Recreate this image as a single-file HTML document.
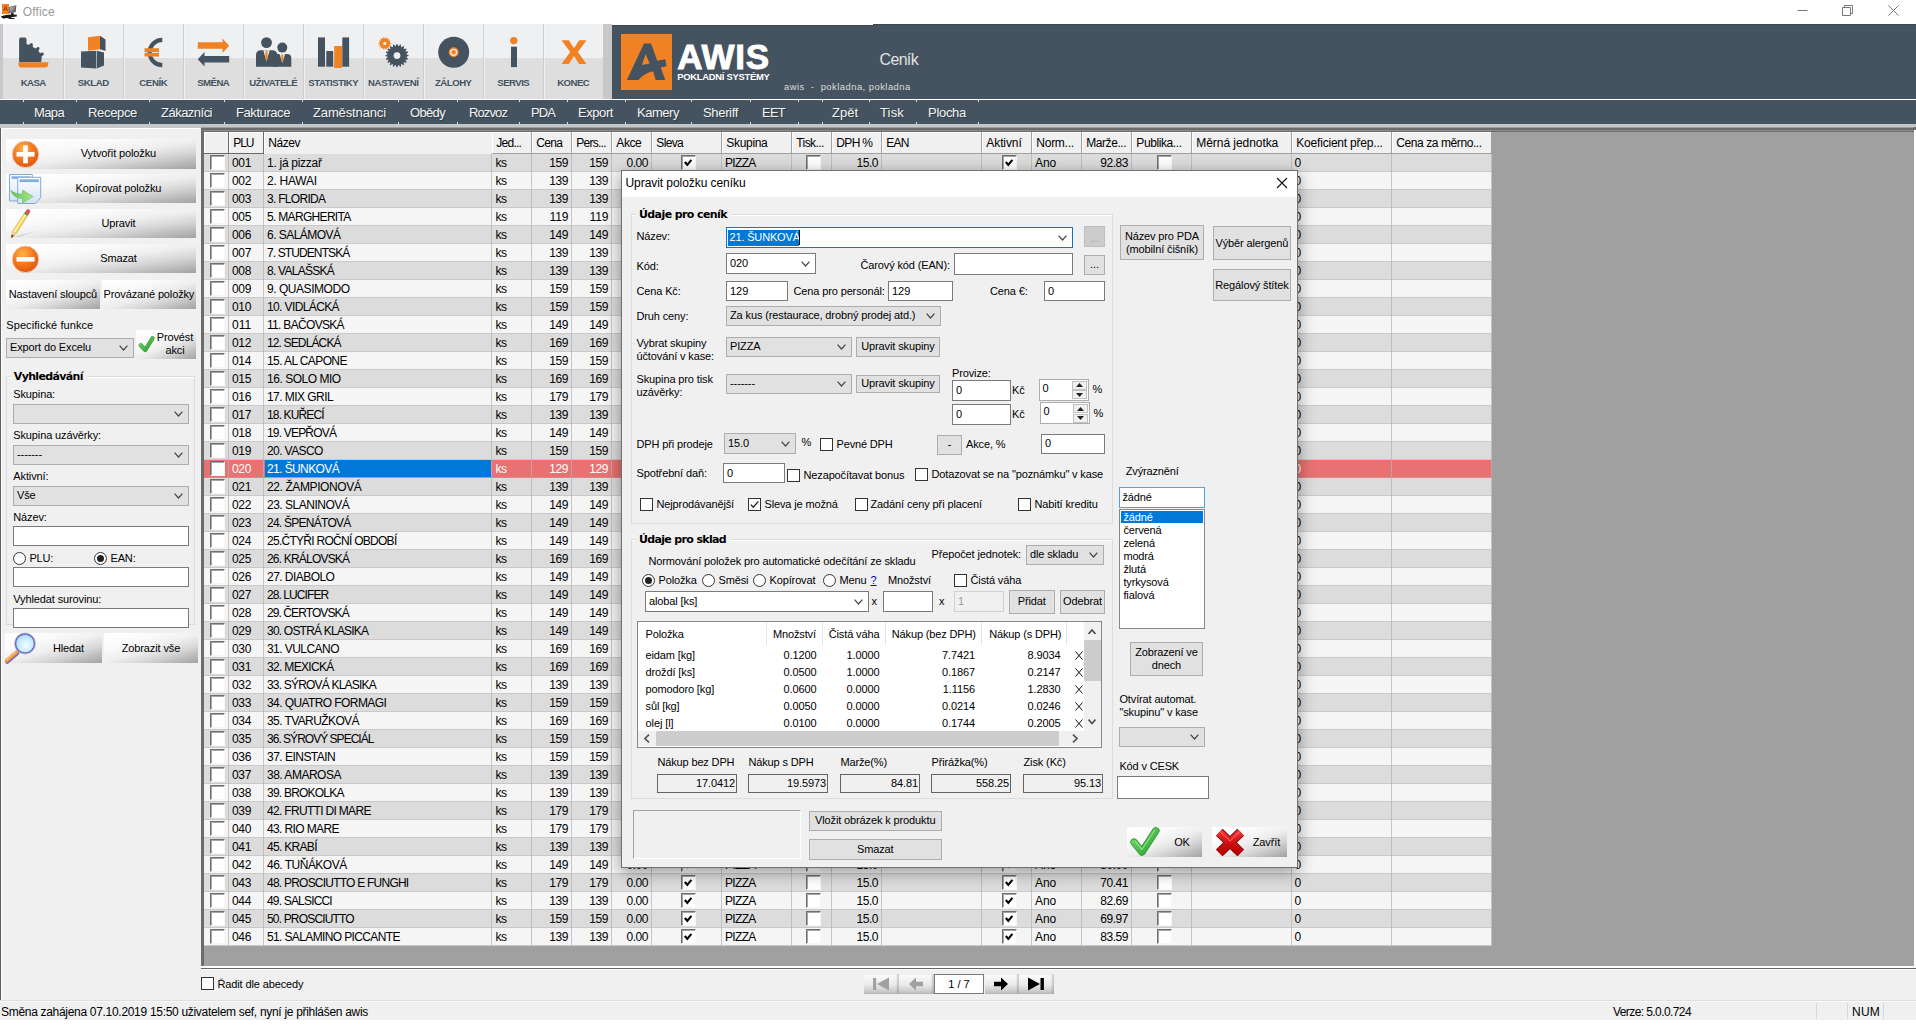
<!DOCTYPE html><html lang="cs"><head><meta charset="utf-8"><title>Office</title><style>
*{box-sizing:border-box}
html,body{margin:0;padding:0}
body{width:1916px;height:1036px;position:relative;overflow:hidden;background:#fff;font-family:"Liberation Sans",sans-serif;font-size:11px;color:#000}
div,span.t,svg{position:absolute}
span.t{white-space:pre;display:block}
.dk{background:#44535f}
.inp{background:#fff;border:1px solid #7a7a7a}
.cmb{background:#e1e1e1;border:1px solid #adadad}
.cmbw{background:#fff;border:1px solid #7a7a7a}
.btn{background:#e1e1e1;border:1px solid #adadad}
.cb{background:#fff;border:1px solid #333;width:13px;height:13px}
.rb{background:#fff;border:1px solid #333;width:13px;height:13px;border-radius:50%}
.gcb{width:15px;height:15px;background:#fff;border:1px solid;border-color:#6e6e6e #f6f6f6 #f6f6f6 #6e6e6e;box-shadow:inset 1px 1px 0 #a6a6a6}
.grp{border:1px solid #dcdcdc}
.hd{background:#f0f0f0;border-right:1px solid #a0a0a0;border-bottom:1px solid #a0a0a0;box-shadow:inset 1px 1px 0 #fff}
</style></head><body>
<svg style="left:0;top:0" width="20" height="22" viewBox="0 0 20 22"><rect x="2" y="4" width="7" height="10" fill="#f08223"/><path d="M3.5 11 L5.5 6 L7.5 11 M4.3 9.3 L7 9" stroke="#a33c08" stroke-width="1" fill="none"/><defs><linearGradient id="mon" x1="0" y1="0" x2="1" y2="1"><stop offset="0" stop-color="#c8c9d0"/><stop offset=".5" stop-color="#8d8f98"/><stop offset="1" stop-color="#34383b"/></linearGradient></defs><path d="M9.2 7 L16.4 5.2 L15.6 12 L8.6 13.6 Z" fill="#4a4d52"/><path d="M9.8 7.5 L15.6 6 L15 11.6 L9.3 12.9 Z" fill="url(#mon)"/><path d="M11 13 L13.5 12.5 L13.8 15.5 L11 15.8 Z" fill="#2c3234"/><path d="M1 16.2 Q8 13.6 16.8 14.8 L16.8 16.6 Q12 17 10 18 L14.5 18 L14.5 19 L10 19 Q6 17 4 18.8 L1.5 17.4 Z" fill="#15191a"/></svg>
<span class="t" style="letter-spacing:0.146px;left:22.8px;top:3.6px;line-height:16px;font-size:12px;color:#999">Office</span>
<svg style="left:1790px;top:0" width="126" height="24" viewBox="0 0 126 24"><g stroke="#777" stroke-width="1" fill="none"><path d="M7.5 10.5h10"/><path d="M52.5 7.5h8v8h-8z M54.5 7.5v-2h8v8h-2"/><path d="M98.5 5.5l10 10M108.5 5.5l-10 10"/></g></svg>
<div style="left:0px;top:24px;width:612px;height:75px;background:#c8c8c8"></div>
<div style="left:3px;top:24px;width:600px;height:34px;background:#eff0f1"></div>
<div style="left:3px;top:58px;width:600px;height:41px;background:#dedede"></div>
<span class="t" style="letter-spacing:-0.550px;left:33.2248px;transform:translateX(-50%);top:76.1px;line-height:13.6px;font-size:9.6px;color:#44535f;font-weight:bold">KASA</span>
<div style="left:63px;top:24px;width:1px;height:75px;background:#cdcdcd"></div>
<div style="left:64px;top:24px;width:1px;height:75px;background:#f6f6f6;opacity:.7"></div>
<span class="t" style="letter-spacing:-0.413px;left:93.2934px;transform:translateX(-50%);top:76.1px;line-height:13.6px;font-size:9.6px;color:#44535f;font-weight:bold">SKLAD</span>
<div style="left:123px;top:24px;width:1px;height:75px;background:#cdcdcd"></div>
<div style="left:124px;top:24px;width:1px;height:75px;background:#f6f6f6;opacity:.7"></div>
<span class="t" style="letter-spacing:-0.374px;left:153.313px;transform:translateX(-50%);top:76.1px;line-height:13.6px;font-size:9.6px;color:#44535f;font-weight:bold">CENÍK</span>
<div style="left:183px;top:24px;width:1px;height:75px;background:#cdcdcd"></div>
<div style="left:184px;top:24px;width:1px;height:75px;background:#f6f6f6;opacity:.7"></div>
<span class="t" style="letter-spacing:-0.534px;left:213.233px;transform:translateX(-50%);top:76.1px;line-height:13.6px;font-size:9.6px;color:#44535f;font-weight:bold">SMĚNA</span>
<div style="left:243px;top:24px;width:1px;height:75px;background:#cdcdcd"></div>
<div style="left:244px;top:24px;width:1px;height:75px;background:#f6f6f6;opacity:.7"></div>
<span class="t" style="letter-spacing:-0.434px;left:273.283px;transform:translateX(-50%);top:76.1px;line-height:13.6px;font-size:9.6px;color:#44535f;font-weight:bold">UŽIVATELÉ</span>
<div style="left:303px;top:24px;width:1px;height:75px;background:#cdcdcd"></div>
<div style="left:304px;top:24px;width:1px;height:75px;background:#f6f6f6;opacity:.7"></div>
<span class="t" style="letter-spacing:-0.458px;left:333.271px;transform:translateX(-50%);top:76.1px;line-height:13.6px;font-size:9.6px;color:#44535f;font-weight:bold">STATISTIKY</span>
<div style="left:363px;top:24px;width:1px;height:75px;background:#cdcdcd"></div>
<div style="left:364px;top:24px;width:1px;height:75px;background:#f6f6f6;opacity:.7"></div>
<span class="t" style="letter-spacing:-0.394px;left:393.303px;transform:translateX(-50%);top:76.1px;line-height:13.6px;font-size:9.6px;color:#44535f;font-weight:bold">NASTAVENÍ</span>
<div style="left:423px;top:24px;width:1px;height:75px;background:#cdcdcd"></div>
<div style="left:424px;top:24px;width:1px;height:75px;background:#f6f6f6;opacity:.7"></div>
<span class="t" style="letter-spacing:-0.494px;left:453.253px;transform:translateX(-50%);top:76.1px;line-height:13.6px;font-size:9.6px;color:#44535f;font-weight:bold">ZÁLOHY</span>
<div style="left:483px;top:24px;width:1px;height:75px;background:#cdcdcd"></div>
<div style="left:484px;top:24px;width:1px;height:75px;background:#f6f6f6;opacity:.7"></div>
<span class="t" style="letter-spacing:-0.507px;left:513.247px;transform:translateX(-50%);top:76.1px;line-height:13.6px;font-size:9.6px;color:#44535f;font-weight:bold">SERVIS</span>
<div style="left:543px;top:24px;width:1px;height:75px;background:#cdcdcd"></div>
<div style="left:544px;top:24px;width:1px;height:75px;background:#f6f6f6;opacity:.7"></div>
<span class="t" style="letter-spacing:-0.534px;left:573.233px;transform:translateX(-50%);top:76.1px;line-height:13.6px;font-size:9.6px;color:#44535f;font-weight:bold">KONEC</span>
<svg style="left:0;top:24px" width="612" height="75" viewBox="0 24 612 75"><path d="M19.1 62.2 L19.1 39.4 Q19.1 37.6 20.9 37.6 L24.8 37.6 Q26.5 37.6 26.5 39.3 L26.5 43.9 L26.63 44.21 L29.13 44.78 L30.83 43.10 L32.80 43.71 L32.85 46.97 L35.39 48.39 L38.18 46.72 L39.73 48.08 L38.45 51.07 L39.89 52.93 L43.11 52.44 L44.04 54.28 L41.72 56.57 L41.65 58.87 L41.32 60.59 L41.30 62.20 L41.3 62.2 Z" fill="#44535f"/><path d="M18.5 62.2 L48.2 62.2 L48.2 64.5 Q48.2 67.5 45 67.5 L21.5 67.5 Q18.5 67.5 18.5 64.5 Z" fill="#f08223"/><path d="M88 37.2 L100 35.7 L100 49.2 L88 50.7 Z" fill="#f08223"/><path d="M100 35.7 L105.5 39.5 L105.5 51 L100 49.2 Z" fill="#44535f"/><path d="M81 51.5 L96.3 50.7 L96.3 68.6 L81 67.4 Z" fill="#44535f"/><path d="M96.9 50.7 L104 52.4 L104 65.5 L96.9 68.6 Z" fill="#44535f"/><path d="M162.3 39.85 A 12.65 12.65 0 0 0 162.3 65.15" fill="none" stroke="#44535f" stroke-width="4.2"/><rect x="144.5" y="48.2" width="14.5" height="3.8" fill="#f08223"/><rect x="144.5" y="52.8" width="14.5" height="3.8" fill="#f08223"/><path d="M197.8 42.3 L222.5 42.3 L222.5 38.4 L229.2 45.7 L222.5 53 L222.5 48.8 L197.8 48.8 Z" fill="#f08223"/><path d="M229.2 56 L204.5 56 L204.5 52 L197.8 59.3 L204.5 66.6 L204.5 62.4 L229.2 62.4 Z" fill="#44535f"/><circle cx="266.5" cy="42.6" r="5.4" fill="#44535f"/><circle cx="282.3" cy="47.6" r="5" fill="#44535f"/><path d="M256 66.7 L256 55 Q256 50.3 261 50.3 L272 50.3 Q277.3 50.3 277.3 55 L277.3 66.7 Z" fill="#44535f"/><path d="M273 66.7 L273 58 Q273 54 277.5 54 L287 54 Q291.3 54 291.3 58 L291.3 66.7 Z" fill="#44535f"/><path d="M263.3 50.3 L266.5 61.5 L269.7 50.3 Z" fill="#eceded"/><path d="M265.6 50.8 L267.4 50.8 L267.8 58 L266.5 60.5 L265.2 58 Z" fill="#f08223"/><path d="M279.5 54 L282.3 63 L285.1 54 Z" fill="#e4e4e4"/><path d="M281.5 54.5 L283.1 54.5 L283.4 60 L282.3 62 L281.2 60 Z" fill="#f08223"/><rect x="318" y="37.4" width="7" height="29.3" fill="#44535f"/><rect x="326.3" y="51" width="6.9" height="15.7" fill="#44535f"/><rect x="334.2" y="46" width="7.8" height="22" fill="#f08223"/><rect x="342.3" y="37.4" width="6.8" height="29.3" fill="#44535f"/><path d="M390.99 43.05 L390.99 43.75 L389.73 44.24 L389.60 44.78 L390.53 45.77 L390.23 46.40 L388.88 46.29 L388.53 46.73 L388.93 48.02 L388.39 48.46 L387.22 47.78 L386.71 48.02 L386.52 49.36 L385.84 49.51 L385.08 48.39 L384.52 48.39 L383.76 49.51 L383.08 49.36 L382.89 48.02 L382.38 47.78 L381.21 48.46 L380.67 48.02 L381.07 46.73 L380.72 46.29 L379.37 46.40 L379.07 45.77 L380.00 44.78 L379.87 44.24 L378.61 43.75 L378.61 43.05 L379.87 42.56 L380.00 42.02 L379.07 41.03 L379.37 40.40 L380.72 40.51 L381.07 40.07 L380.67 38.78 L381.21 38.34 L382.38 39.02 L382.89 38.78 L383.08 37.44 L383.76 37.29 L384.52 38.41 L385.08 38.41 L385.84 37.29 L386.52 37.44 L386.71 38.78 L387.22 39.02 L388.39 38.34 L388.93 38.78 L388.53 40.07 L388.88 40.51 L390.23 40.40 L390.53 41.03 L389.60 42.02 L389.73 42.56Z" fill="#f08223"/><circle cx="384.8" cy="43.4" r="1.7" fill="#f6e8dc"/><path d="M408.59 55.14 L408.59 56.06 L406.63 56.74 L406.51 57.49 L408.16 58.75 L407.88 59.61 L405.81 59.66 L405.46 60.34 L406.65 62.04 L406.11 62.78 L404.12 62.18 L403.58 62.72 L404.18 64.71 L403.44 65.25 L401.74 64.06 L401.06 64.41 L401.01 66.48 L400.15 66.76 L398.89 65.11 L398.14 65.23 L397.46 67.19 L396.54 67.19 L395.86 65.23 L395.11 65.11 L393.85 66.76 L392.99 66.48 L392.94 64.41 L392.26 64.06 L390.56 65.25 L389.82 64.71 L390.42 62.72 L389.88 62.18 L387.89 62.78 L387.35 62.04 L388.54 60.34 L388.19 59.66 L386.12 59.61 L385.84 58.75 L387.49 57.49 L387.37 56.74 L385.41 56.06 L385.41 55.14 L387.37 54.46 L387.49 53.71 L385.84 52.45 L386.12 51.59 L388.19 51.54 L388.54 50.86 L387.35 49.16 L387.89 48.42 L389.88 49.02 L390.42 48.48 L389.82 46.49 L390.56 45.95 L392.26 47.14 L392.94 46.79 L392.99 44.72 L393.85 44.44 L395.11 46.09 L395.86 45.97 L396.54 44.01 L397.46 44.01 L398.14 45.97 L398.89 46.09 L400.15 44.44 L401.01 44.72 L401.06 46.79 L401.74 47.14 L403.44 45.95 L404.18 46.49 L403.58 48.48 L404.12 49.02 L406.11 48.42 L406.65 49.16 L405.46 50.86 L405.81 51.54 L407.88 51.59 L408.16 52.45 L406.51 53.71 L406.63 54.46Z" fill="#44535f"/><circle cx="397" cy="55.6" r="3.4" fill="#eeeeef"/><circle cx="453.7" cy="52.3" r="15.5" fill="#44535f"/><circle cx="453.7" cy="52.3" r="5" fill="#f08223"/><circle cx="453.7" cy="52.3" r="3.6" fill="#f3e6da"/><circle cx="453.7" cy="52.3" r="2.2" fill="#f08223"/><circle cx="513.8" cy="40.6" r="3.7" fill="#f08223"/><rect x="511" y="46.7" width="6" height="20.4" fill="#44535f"/><path d="M561.5 40.3 L568.8 40.3 L574 48.3 L579.2 40.3 L586.5 40.3 L577.8 52.1 L586.5 64 L579.2 64 L574 56 L568.8 64 L561.5 64 L570.2 52.1 Z" fill="#f08223"/></svg>
<div class="dk" style="left:612px;top:25px;width:1304px;height:74px;"></div>
<div class="dk" style="left:873px;top:24px;width:1043px;height:2px;"></div>
<div style="left:612px;top:25px;width:261px;height:1px;background:#3b4853"></div>
<div style="left:873px;top:24px;width:1043px;height:1px;background:#3b4853"></div>
<svg style="left:620.6px;top:33.8px" width="51" height="56" viewBox="0 0 51 56"><rect width="51" height="56" fill="#f08223"/><path d="M5.85 45.9 L22.96 9.6 L30.06 9.6 L36.3 26.7 L44.3 25.3 L45.5 32.2 L39.7 33.6 L44.3 45.9 L34.7 45.9 L32.2 37.2 Q23 39.2 17.5 45.9 Z M20.9 30.9 L24.6 20 L28.6 29.6 Z" fill="#44535f" fill-rule="evenodd"/></svg>
<span class="t" style="letter-spacing:0.763px;left:677.3px;top:36.9px;line-height:39px;font-size:35px;color:#fff;font-weight:bold;-webkit-text-stroke:0.9px #fff">AWIS</span>
<span class="t" style="letter-spacing:-0.258px;left:677.3px;top:70.3px;line-height:13.4px;font-size:9.4px;color:#fff;font-weight:bold">POKLADNÍ SYSTÉMY</span>
<span class="t" style="letter-spacing:-0.659px;left:879.5px;top:50px;line-height:20px;font-size:16px;color:#e2e2e2">Ceník</span>
<span class="t" style="letter-spacing:0.485px;left:784px;top:79.7px;line-height:13.4px;font-size:9.4px;color:#dcdcdc">awis  -  pokladna, pokladna</span>
<div style="left:0px;top:99px;width:1916px;height:1px;background:#fff"></div>
<div class="dk" style="left:0px;top:100px;width:1916px;height:24px;"></div>
<div style="left:0px;top:124px;width:1916px;height:4px;background:#c4c7c9"></div>
<div style="left:201px;top:127px;width:1715px;height:1px;background:#9d9fa0"></div>
<span class="t" style="letter-spacing:-0.630px;left:34px;top:104px;line-height:17px;font-size:13px;color:#f4f4f4;text-shadow:1px 1px 0 rgba(20,28,36,.45)">Mapa</span>
<span class="t" style="letter-spacing:-0.330px;left:88px;top:104px;line-height:17px;font-size:13px;color:#f4f4f4;text-shadow:1px 1px 0 rgba(20,28,36,.45)">Recepce</span>
<span class="t" style="letter-spacing:-0.515px;left:161px;top:104px;line-height:17px;font-size:13px;color:#f4f4f4;text-shadow:1px 1px 0 rgba(20,28,36,.45)">Zákazníci</span>
<span class="t" style="letter-spacing:-0.422px;left:236px;top:104px;line-height:17px;font-size:13px;color:#f4f4f4;text-shadow:1px 1px 0 rgba(20,28,36,.45)">Fakturace</span>
<span class="t" style="letter-spacing:-0.129px;left:313px;top:104px;line-height:17px;font-size:13px;color:#f4f4f4;text-shadow:1px 1px 0 rgba(20,28,36,.45)">Zaměstnanci</span>
<span class="t" style="letter-spacing:-0.660px;left:410px;top:104px;line-height:17px;font-size:13px;color:#f4f4f4;text-shadow:1px 1px 0 rgba(20,28,36,.45)">Obědy</span>
<span class="t" style="letter-spacing:-0.891px;left:469px;top:104px;line-height:17px;font-size:13px;color:#f4f4f4;text-shadow:1px 1px 0 rgba(20,28,36,.45)">Rozvoz</span>
<span class="t" style="letter-spacing:-0.910px;left:531px;top:104px;line-height:17px;font-size:13px;color:#f4f4f4;text-shadow:1px 1px 0 rgba(20,28,36,.45)">PDA</span>
<span class="t" style="letter-spacing:-0.429px;left:578px;top:104px;line-height:17px;font-size:13px;color:#f4f4f4;text-shadow:1px 1px 0 rgba(20,28,36,.45)">Export</span>
<span class="t" style="letter-spacing:-0.465px;left:637px;top:104px;line-height:17px;font-size:13px;color:#f4f4f4;text-shadow:1px 1px 0 rgba(20,28,36,.45)">Kamery</span>
<span class="t" style="letter-spacing:-0.334px;left:703px;top:104px;line-height:17px;font-size:13px;color:#f4f4f4;text-shadow:1px 1px 0 rgba(20,28,36,.45)">Sheriff</span>
<span class="t" style="letter-spacing:-0.761px;left:762px;top:104px;line-height:17px;font-size:13px;color:#f4f4f4;text-shadow:1px 1px 0 rgba(20,28,36,.45)">EET</span>
<span class="t" style="letter-spacing:-0.003px;left:832px;top:104px;line-height:17px;font-size:13px;color:#f4f4f4;text-shadow:1px 1px 0 rgba(20,28,36,.45)">Zpět</span>
<span class="t" style="letter-spacing:0.163px;left:880px;top:104px;line-height:17px;font-size:13px;color:#f4f4f4;text-shadow:1px 1px 0 rgba(20,28,36,.45)">Tisk</span>
<span class="t" style="letter-spacing:-0.292px;left:928px;top:104px;line-height:17px;font-size:13px;color:#f4f4f4;text-shadow:1px 1px 0 rgba(20,28,36,.45)">Plocha</span>
<div style="left:22.5px;top:100px;width:1px;height:2px;background:#dfe3e6"></div>
<div style="left:22.5px;top:122px;width:1px;height:2px;background:#dfe3e6"></div>
<div style="left:76px;top:100px;width:1px;height:2px;background:#dfe3e6"></div>
<div style="left:76px;top:122px;width:1px;height:2px;background:#dfe3e6"></div>
<div style="left:149px;top:100px;width:1px;height:2px;background:#dfe3e6"></div>
<div style="left:149px;top:122px;width:1px;height:2px;background:#dfe3e6"></div>
<div style="left:224px;top:100px;width:1px;height:2px;background:#dfe3e6"></div>
<div style="left:224px;top:122px;width:1px;height:2px;background:#dfe3e6"></div>
<div style="left:301.5px;top:100px;width:1px;height:2px;background:#dfe3e6"></div>
<div style="left:301.5px;top:122px;width:1px;height:2px;background:#dfe3e6"></div>
<div style="left:397.5px;top:100px;width:1px;height:2px;background:#dfe3e6"></div>
<div style="left:397.5px;top:122px;width:1px;height:2px;background:#dfe3e6"></div>
<div style="left:456.5px;top:100px;width:1px;height:2px;background:#dfe3e6"></div>
<div style="left:456.5px;top:122px;width:1px;height:2px;background:#dfe3e6"></div>
<div style="left:518.5px;top:100px;width:1px;height:2px;background:#dfe3e6"></div>
<div style="left:518.5px;top:122px;width:1px;height:2px;background:#dfe3e6"></div>
<div style="left:566.5px;top:100px;width:1px;height:2px;background:#dfe3e6"></div>
<div style="left:566.5px;top:122px;width:1px;height:2px;background:#dfe3e6"></div>
<div style="left:625px;top:100px;width:1px;height:2px;background:#dfe3e6"></div>
<div style="left:625px;top:122px;width:1px;height:2px;background:#dfe3e6"></div>
<div style="left:691px;top:100px;width:1px;height:2px;background:#dfe3e6"></div>
<div style="left:691px;top:122px;width:1px;height:2px;background:#dfe3e6"></div>
<div style="left:750px;top:100px;width:1px;height:2px;background:#dfe3e6"></div>
<div style="left:750px;top:122px;width:1px;height:2px;background:#dfe3e6"></div>
<div style="left:797.5px;top:100px;width:1px;height:2px;background:#dfe3e6"></div>
<div style="left:797.5px;top:122px;width:1px;height:2px;background:#dfe3e6"></div>
<div style="left:821.5px;top:100px;width:1px;height:2px;background:#dfe3e6"></div>
<div style="left:821.5px;top:122px;width:1px;height:2px;background:#dfe3e6"></div>
<div style="left:869px;top:100px;width:1px;height:2px;background:#dfe3e6"></div>
<div style="left:869px;top:122px;width:1px;height:2px;background:#dfe3e6"></div>
<div style="left:916px;top:100px;width:1px;height:2px;background:#dfe3e6"></div>
<div style="left:916px;top:122px;width:1px;height:2px;background:#dfe3e6"></div>
<div style="left:978px;top:100px;width:1px;height:2px;background:#dfe3e6"></div>
<div style="left:978px;top:122px;width:1px;height:2px;background:#dfe3e6"></div>
<div style="left:0px;top:128px;width:1916px;height:892px;background:#f0f0f0"></div>
<div style="left:0px;top:128px;width:1px;height:872px;background:#8a8a8a"></div>
<div style="left:1px;top:128px;width:198px;height:1px;background:#fff"></div>
<div style="left:1px;top:128px;width:1px;height:872px;background:#fff"></div>
<div style="left:201px;top:128px;width:1713px;height:840px;background:#6c6c6c"></div>
<div style="left:203px;top:130px;width:1711px;height:1px;background:#8c8c8c"></div>
<div style="left:203.5px;top:132px;width:1710.5px;height:834px;background:#a0a0a0"></div>
<div style="left:201px;top:966px;width:1715px;height:2px;background:#fff"></div>
<div style="left:1914px;top:130px;width:2px;height:838px;background:#fff"></div>
<div style="left:1914px;top:127px;width:2px;height:3px;background:#6c6c6c"></div>
<div style="left:6px;top:139.3px;width:190px;height:29.3px;background:linear-gradient(171.9deg,#ffffff 0%,#fafafa 30%,#eeeeee 52%,#d6d6d6 70%,#bababa 86%,#a2a2a2 100%)"></div><span class="t" style="letter-spacing:-0.121px;left:118.44px;transform:translateX(-50%);top:146.45px;line-height:15px;font-size:11px">Vytvořit položku</span>
<div style="left:6px;top:174.2px;width:190px;height:29.3px;background:linear-gradient(171.9deg,#ffffff 0%,#fafafa 30%,#eeeeee 52%,#d6d6d6 70%,#bababa 86%,#a2a2a2 100%)"></div><span class="t" style="letter-spacing:-0.129px;left:118.435px;transform:translateX(-50%);top:181.35px;line-height:15px;font-size:11px">Kopírovat položku</span>
<div style="left:6px;top:209.2px;width:190px;height:29.3px;background:linear-gradient(171.9deg,#ffffff 0%,#fafafa 30%,#eeeeee 52%,#d6d6d6 70%,#bababa 86%,#a2a2a2 100%)"></div><span class="t" style="letter-spacing:-0.124px;left:118.438px;transform:translateX(-50%);top:216.35px;line-height:15px;font-size:11px">Upravit</span>
<div style="left:6px;top:244.1px;width:190px;height:29.4px;background:linear-gradient(171.9deg,#ffffff 0%,#fafafa 30%,#eeeeee 52%,#d6d6d6 70%,#bababa 86%,#a2a2a2 100%)"></div><span class="t" style="letter-spacing:-0.155px;left:118.422px;transform:translateX(-50%);top:251.3px;line-height:15px;font-size:11px">Smazat</span>
<div style="left:5.5px;top:279.5px;width:94.5px;height:29px;background:linear-gradient(164.2deg,#ffffff 0%,#fafafa 30%,#eeeeee 52%,#d6d6d6 70%,#bababa 86%,#a2a2a2 100%)"></div><span class="t" style="letter-spacing:-0.133px;left:52.9335px;transform:translateX(-50%);top:286.5px;line-height:15px;font-size:11px">Nastavení sloupců</span>
<div style="left:101.5px;top:279.5px;width:94.5px;height:29px;background:linear-gradient(164.2deg,#ffffff 0%,#fafafa 30%,#eeeeee 52%,#d6d6d6 70%,#bababa 86%,#a2a2a2 100%)"></div><span class="t" style="letter-spacing:-0.137px;left:148.932px;transform:translateX(-50%);top:286.5px;line-height:15px;font-size:11px">Provázané položky</span>
<span class="t" style="letter-spacing:0.082px;left:6.3px;top:317.5px;line-height:15px;font-size:11px">Specifické funkce</span>
<div class="cmb" style="left:6px;top:337.5px;width:127.5px;height:20.5px;"></div><svg style="left:118.5px;top:345.25px" width="9" height="6" viewBox="0 0 9 6"><path d="M0.6 0.6 L4.5 5 L8.4 0.6" fill="none" stroke="#444" stroke-width="1.2"/></svg><span class="t" style="letter-spacing:-0.130px;left:10px;top:340.25px;line-height:15px;font-size:11px">Export do Excelu</span>
<div style="left:135.5px;top:329.5px;width:60.5px;height:29px;background:linear-gradient(156.1deg,#ffffff 0%,#fafafa 30%,#eeeeee 52%,#d6d6d6 70%,#bababa 86%,#a2a2a2 100%)"></div><span class="t" style="letter-spacing:-0.133px;left:174.933px;transform:translateX(-50%);top:330.25px;line-height:15px;font-size:11px">Provést</span><span class="t" style="letter-spacing:-0.122px;left:174.939px;transform:translateX(-50%);top:342.75px;line-height:15px;font-size:11px">akci</span>
<svg style="left:0;top:128px" width="200" height="240" viewBox="0 128 200 240"><defs><radialGradient id="og" cx="40%" cy="30%" r="75%"><stop offset="0" stop-color="#ffb347"/><stop offset="0.55" stop-color="#f4741c"/><stop offset="1" stop-color="#d9540f"/></radialGradient><linearGradient id="pg" x1="0" y1="0" x2="0" y2="1"><stop offset="0" stop-color="#ffffff"/><stop offset="1" stop-color="#d3e3f4"/></linearGradient><linearGradient id="gg" x1="0" y1="0" x2="1" y2="0"><stop offset="0" stop-color="#66bf58"/><stop offset="1" stop-color="#a6e88c"/></linearGradient><linearGradient id="ck" x1="0" y1="0" x2="1" y2="1"><stop offset="0" stop-color="#7ddc6c"/><stop offset="1" stop-color="#1f9a28"/></linearGradient></defs><circle cx="25.5" cy="154.3" r="13.3" fill="url(#og)" stroke="#e8d6c6" stroke-width="1"/><rect x="16.5" y="152" width="18" height="4.6" fill="#fff"/><rect x="23.2" y="145.3" width="4.6" height="18" fill="#fff"/><circle cx="25.5" cy="259.3" r="13.3" fill="url(#og)" stroke="#e8d6c6" stroke-width="1"/><rect x="16.5" y="257" width="18" height="4.6" fill="#fff"/><path d="M9.5 174.5 L32.3 174.5 L32.3 201 L9.5 201 Z" fill="url(#pg)" stroke="#86a9d0" stroke-width="1"/><rect x="11.5" y="176.3" width="19" height="2.6" fill="#7fb0e2"/><path d="M17.7 177.3 L40.7 177.3 L40.7 197.5 L35.5 203.5 L17.7 203.5 Z" fill="url(#pg)" stroke="#86a9d0" stroke-width="1"/><rect x="19.5" y="179.3" width="19.4" height="2.8" fill="#7fb0e2"/><path d="M10.6 190.3 Q13.5 198.8 22.5 198.6 L22.5 203 L33.2 196.6 L22.5 190 L22.5 194 Q15.5 194.4 10.6 190.3 Z" fill="url(#gg)" stroke="#62b356" stroke-width=".5"/><path d="M11.5 237.2 L38 230.5 L20 236.6 Z" fill="#000" opacity=".13"/><path d="M11.2 238 L12.6 231.2 L25 212.2 L28.4 214.4 L16.2 233.8 Z" fill="#f4d752" stroke="#c39a2a" stroke-width=".5"/><path d="M13.6 231.6 L26 212.8 L27 213.5 L14.8 232.5 Z" fill="#fdf6b8"/><path d="M11.2 238 L12 234.3 L14 235.7 Z" fill="#3a3226"/><path d="M12.6 231.2 L16.2 233.8 L14 235.7 L12 234.3 Z" fill="#ecd3a6"/><path d="M25 212.2 L26.5 209.8 Q27.7 208.6 29.3 209.6 Q30.8 210.8 30 212.2 L28.4 214.4 Z" fill="#d9525a"/><path d="M24.2 213.5 L27.6 215.7 L28.4 214.4 L25 212.2 Z" fill="#3f7d4a"/><path d="M140.7 345.2 L145.3 350 L152.6 338.2" fill="none" stroke="#3a9a3c" stroke-width="4.2" stroke-linecap="round" stroke-linejoin="round"/><path d="M140.7 345.2 L145.3 350 L152.6 338.2" fill="none" stroke="url(#ck)" stroke-width="3" stroke-linecap="round" stroke-linejoin="round"/></svg>
<div class="grp" style="left:5.5px;top:376px;width:189px;height:249px;"></div>
<div style="left:6.5px;top:377px;width:187px;height:1px;background:#fff"></div>
<div style="left:11px;top:368px;width:76px;height:16px;background:#f0f0f0"></div>
<span class="t" style="letter-spacing:-0.658px;left:13.8px;top:368.5px;line-height:15px;font-size:11px;font-weight:bold;font-family:'DejaVu Sans',sans-serif">Vyhledávání</span>
<span class="t" style="letter-spacing:-0.134px;left:13.3px;top:387px;line-height:15px;font-size:11px">Skupina:</span>
<div class="cmb" style="left:13px;top:403.5px;width:175.5px;height:20.5px;"></div><svg style="left:173.5px;top:411.25px" width="9" height="6" viewBox="0 0 9 6"><path d="M0.6 0.6 L4.5 5 L8.4 0.6" fill="none" stroke="#444" stroke-width="1.2"/></svg>
<span class="t" style="letter-spacing:-0.132px;left:13.3px;top:428px;line-height:15px;font-size:11px">Skupina uzávěrky:</span>
<div class="cmb" style="left:13px;top:444.5px;width:175.5px;height:20.5px;"></div><svg style="left:173.5px;top:452.25px" width="9" height="6" viewBox="0 0 9 6"><path d="M0.6 0.6 L4.5 5 L8.4 0.6" fill="none" stroke="#444" stroke-width="1.2"/></svg><span class="t" style="letter-spacing:-0.092px;left:17px;top:447.25px;line-height:15px;font-size:11px">-------</span>
<span class="t" style="letter-spacing:-0.113px;left:13.3px;top:469px;line-height:15px;font-size:11px">Aktivní:</span>
<div class="cmb" style="left:13px;top:485.5px;width:175.5px;height:20.5px;"></div><svg style="left:173.5px;top:493.25px" width="9" height="6" viewBox="0 0 9 6"><path d="M0.6 0.6 L4.5 5 L8.4 0.6" fill="none" stroke="#444" stroke-width="1.2"/></svg><span class="t" style="letter-spacing:-0.158px;left:17px;top:488.25px;line-height:15px;font-size:11px">Vše</span>
<span class="t" style="letter-spacing:-0.143px;left:13.3px;top:510px;line-height:15px;font-size:11px">Název:</span>
<div class="inp" style="left:13px;top:526px;width:176px;height:20px;"></div>
<div class="rb" style="left:13px;top:551.5px"></div><span class="t" style="letter-spacing:-0.153px;left:29.4px;top:550.5px;line-height:15px;font-size:11px">PLU:</span>
<div class="rb" style="left:94px;top:551.5px"></div><div style="left:97px;top:554.5px;width:7px;height:7px;border-radius:50%;background:#222"></div><span class="t" style="letter-spacing:-0.160px;left:110.5px;top:550.5px;line-height:15px;font-size:11px">EAN:</span>
<div class="inp" style="left:13px;top:567px;width:176px;height:20px;"></div>
<span class="t" style="letter-spacing:-0.125px;left:13.3px;top:592px;line-height:15px;font-size:11px">Vyhledat surovinu:</span>
<div class="inp" style="left:13px;top:608px;width:176px;height:20px;"></div>
<div style="left:5px;top:633px;width:97px;height:30px;background:linear-gradient(164.1deg,#ffffff 0%,#fafafa 30%,#eeeeee 52%,#d6d6d6 70%,#bababa 86%,#a2a2a2 100%)"></div><span class="t" style="letter-spacing:-0.132px;left:68.4338px;transform:translateX(-50%);top:640.5px;line-height:15px;font-size:11px">Hledat</span>
<div style="left:104px;top:633px;width:94px;height:30px;background:linear-gradient(163.6deg,#ffffff 0%,#fafafa 30%,#eeeeee 52%,#d6d6d6 70%,#bababa 86%,#a2a2a2 100%)"></div><span class="t" style="letter-spacing:-0.125px;left:150.938px;transform:translateX(-50%);top:640.5px;line-height:15px;font-size:11px">Zobrazit vše</span>
<svg style="left:0;top:628px" width="44" height="42" viewBox="0 628 44 42"><defs><radialGradient id="mg" cx="55%" cy="60%" r="65%"><stop offset="0" stop-color="#f6fdff"/><stop offset="0.6" stop-color="#c4eafb"/><stop offset="1" stop-color="#9fd6f5"/></radialGradient></defs><path d="M7.2 661.6 L17 653" stroke="#7d6aa8" stroke-width="4.6" stroke-linecap="round"/><path d="M6.6 660.6 L16.6 652" stroke="#f09a3e" stroke-width="3.6" stroke-linecap="round"/><path d="M6.6 659.9 L16 651.8" stroke="#fbc27a" stroke-width="1.2" stroke-linecap="round"/><circle cx="25" cy="643.5" r="9.6" fill="url(#mg)" stroke="#6b6fc4" stroke-width="1.7"/><circle cx="25" cy="643.5" r="10.6" fill="none" stroke="#b9b9e6" stroke-width=".7" opacity=".8"/></svg>
<div style="left:204px;top:132px;width:1288px;height:22px;background:#f0f0f0"></div>
<div class="hd" style="left:204px;top:132px;width:25px;height:22px;border-color:#6a6a6a"></div>
<div class="hd" style="left:229px;top:132px;width:35px;height:22px;border-color:#6a6a6a"></div>
<span class="t" style="letter-spacing:-1.050px;left:233.3px;top:135.3px;line-height:16px;font-size:12px">PLU</span>
<div class="hd" style="left:264px;top:132px;width:228px;height:22px;border-color:#f0f0f0;box-shadow:inset 1px 1px 0 #fff"></div>
<span class="t" style="letter-spacing:-0.427px;left:268.3px;top:135.3px;line-height:16px;font-size:12px">Název</span>
<div class="hd" style="left:492px;top:132px;width:40px;height:22px;"></div>
<span class="t" style="letter-spacing:-0.741px;left:496.3px;top:135.3px;line-height:16px;font-size:12px">Jed...</span>
<div class="hd" style="left:532px;top:132px;width:40px;height:22px;"></div>
<span class="t" style="letter-spacing:-0.655px;left:536.3px;top:135.3px;line-height:16px;font-size:12px">Cena</span>
<div class="hd" style="left:572px;top:132px;width:40px;height:22px;"></div>
<span class="t" style="letter-spacing:-0.744px;left:576.3px;top:135.3px;line-height:16px;font-size:12px">Pers...</span>
<div class="hd" style="left:612px;top:132px;width:40px;height:22px;"></div>
<span class="t" style="letter-spacing:-0.416px;left:616.3px;top:135.3px;line-height:16px;font-size:12px">Akce</span>
<div class="hd" style="left:652px;top:132px;width:70px;height:22px;"></div>
<span class="t" style="letter-spacing:-0.632px;left:656.3px;top:135.3px;line-height:16px;font-size:12px">Sleva</span>
<div class="hd" style="left:722px;top:132px;width:70px;height:22px;"></div>
<span class="t" style="letter-spacing:-0.318px;left:726.3px;top:135.3px;line-height:16px;font-size:12px">Skupina</span>
<div class="hd" style="left:792px;top:132px;width:40px;height:22px;"></div>
<span class="t" style="letter-spacing:-0.580px;left:796.3px;top:135.3px;line-height:16px;font-size:12px">Tisk...</span>
<div class="hd" style="left:832px;top:132px;width:50px;height:22px;"></div>
<span class="t" style="letter-spacing:-0.664px;left:836.3px;top:135.3px;line-height:16px;font-size:12px">DPH %</span>
<div class="hd" style="left:882px;top:132px;width:100px;height:22px;"></div>
<span class="t" style="letter-spacing:-0.781px;left:886.3px;top:135.3px;line-height:16px;font-size:12px">EAN</span>
<div class="hd" style="left:982px;top:132px;width:50px;height:22px;"></div>
<span class="t" style="letter-spacing:-0.087px;left:986.3px;top:135.3px;line-height:16px;font-size:12px">Aktivní</span>
<div class="hd" style="left:1032px;top:132px;width:50px;height:22px;"></div>
<span class="t" style="letter-spacing:-0.253px;left:1036.3px;top:135.3px;line-height:16px;font-size:12px">Norm...</span>
<div class="hd" style="left:1082px;top:132px;width:50px;height:22px;"></div>
<span class="t" style="letter-spacing:-0.449px;left:1086.3px;top:135.3px;line-height:16px;font-size:12px">Marže...</span>
<div class="hd" style="left:1132px;top:132px;width:60px;height:22px;"></div>
<span class="t" style="letter-spacing:-0.403px;left:1136.3px;top:135.3px;line-height:16px;font-size:12px">Publika...</span>
<div class="hd" style="left:1192px;top:132px;width:100px;height:22px;"></div>
<span class="t" style="letter-spacing:-0.056px;left:1196.3px;top:135.3px;line-height:16px;font-size:12px">Měrná jednotka</span>
<div class="hd" style="left:1292px;top:132px;width:100px;height:22px;"></div>
<span class="t" style="letter-spacing:-0.203px;left:1296.3px;top:135.3px;line-height:16px;font-size:12px">Koeficient přep...</span>
<div class="hd" style="left:1392px;top:132px;width:100px;height:22px;"></div>
<span class="t" style="letter-spacing:-0.416px;left:1396.3px;top:135.3px;line-height:16px;font-size:12px">Cena za měrno...</span>
<div style="left:204px;top:154px;width:1288px;height:18px;background:#dcdcdc;border-bottom:1px solid #c9c9c9"></div>
<div class="gcb" style="left:210px;top:155px"></div>
<span class="t" style="letter-spacing:-0.334px;left:232px;top:155px;line-height:16px;font-size:12px;color:#000">001</span>
<span class="t" style="letter-spacing:-0.282px;left:267px;top:155px;line-height:16px;font-size:12px;color:#000">1. já pizzař</span>
<span class="t" style="letter-spacing:-0.582px;left:495.5px;top:155px;line-height:16px;font-size:12px;color:#000">ks</span>
<span class="t" style="letter-spacing:-0.334px;right:1347.83px;top:155px;line-height:16px;font-size:12px;color:#000">159</span>
<span class="t" style="letter-spacing:-0.334px;right:1307.83px;top:155px;line-height:16px;font-size:12px;color:#000">159</span>
<span class="t" style="letter-spacing:-0.447px;right:1267.95px;top:155px;line-height:16px;font-size:12px;color:#000">0.00</span>
<div class="gcb" style="left:681px;top:155px"></div><svg style="left:681px;top:155px" width="15" height="15" viewBox="0 0 15 15"><path d="M3.8 7 L6.3 9.8 L10.4 4.8" fill="none" stroke="#000" stroke-width="2.1"/></svg>
<span class="t" style="letter-spacing:-0.657px;left:725px;top:155px;line-height:16px;font-size:12px;color:#000">PIZZA</span>
<div class="gcb" style="left:806px;top:155px"></div>
<span class="t" style="letter-spacing:-0.447px;right:1037.95px;top:155px;line-height:16px;font-size:12px;color:#000">15.0</span>
<div class="gcb" style="left:1001.5px;top:155px"></div><svg style="left:1001.5px;top:155px" width="15" height="15" viewBox="0 0 15 15"><path d="M3.8 7 L6.3 9.8 L10.4 4.8" fill="none" stroke="#000" stroke-width="2.1"/></svg>
<span class="t" style="letter-spacing:-0.074px;left:1035px;top:155px;line-height:16px;font-size:12px;color:#000">Ano</span>
<span class="t" style="letter-spacing:-0.424px;right:787.924px;top:155px;line-height:16px;font-size:12px;color:#000">92.83</span>
<div class="gcb" style="left:1157px;top:155px"></div>
<span class="t" style="left:1294.5px;top:155px;line-height:16px;font-size:12px;color:#000">0</span>
<div style="left:204px;top:172px;width:1288px;height:18px;background:#f5f5f5;border-bottom:1px solid #c9c9c9"></div>
<div class="gcb" style="left:210px;top:173px"></div>
<span class="t" style="letter-spacing:-0.334px;left:232px;top:173px;line-height:16px;font-size:12px;color:#000">002</span>
<span class="t" style="letter-spacing:-0.253px;left:267px;top:173px;line-height:16px;font-size:12px;color:#000">2. HAWAI</span>
<span class="t" style="letter-spacing:-0.582px;left:495.5px;top:173px;line-height:16px;font-size:12px;color:#000">ks</span>
<span class="t" style="letter-spacing:-0.334px;right:1347.83px;top:173px;line-height:16px;font-size:12px;color:#000">139</span>
<span class="t" style="letter-spacing:-0.334px;right:1307.83px;top:173px;line-height:16px;font-size:12px;color:#000">139</span>
<span class="t" style="letter-spacing:-0.447px;right:1267.95px;top:173px;line-height:16px;font-size:12px;color:#000">0.00</span>
<div class="gcb" style="left:681px;top:173px"></div><svg style="left:681px;top:173px" width="15" height="15" viewBox="0 0 15 15"><path d="M3.8 7 L6.3 9.8 L10.4 4.8" fill="none" stroke="#000" stroke-width="2.1"/></svg>
<span class="t" style="letter-spacing:-0.657px;left:725px;top:173px;line-height:16px;font-size:12px;color:#000">PIZZA</span>
<div class="gcb" style="left:806px;top:173px"></div>
<span class="t" style="letter-spacing:-0.447px;right:1037.95px;top:173px;line-height:16px;font-size:12px;color:#000">15.0</span>
<div class="gcb" style="left:1001.5px;top:173px"></div><svg style="left:1001.5px;top:173px" width="15" height="15" viewBox="0 0 15 15"><path d="M3.8 7 L6.3 9.8 L10.4 4.8" fill="none" stroke="#000" stroke-width="2.1"/></svg>
<span class="t" style="letter-spacing:-0.074px;left:1035px;top:173px;line-height:16px;font-size:12px;color:#000">Ano</span>
<div class="gcb" style="left:1157px;top:173px"></div>
<span class="t" style="left:1294.5px;top:173px;line-height:16px;font-size:12px;color:#000">0</span>
<div style="left:204px;top:190px;width:1288px;height:18px;background:#dcdcdc;border-bottom:1px solid #c9c9c9"></div>
<div class="gcb" style="left:210px;top:191px"></div>
<span class="t" style="letter-spacing:-0.334px;left:232px;top:191px;line-height:16px;font-size:12px;color:#000">003</span>
<span class="t" style="letter-spacing:-0.710px;left:267px;top:191px;line-height:16px;font-size:12px;color:#000">3. FLORIDA</span>
<span class="t" style="letter-spacing:-0.582px;left:495.5px;top:191px;line-height:16px;font-size:12px;color:#000">ks</span>
<span class="t" style="letter-spacing:-0.334px;right:1347.83px;top:191px;line-height:16px;font-size:12px;color:#000">139</span>
<span class="t" style="letter-spacing:-0.334px;right:1307.83px;top:191px;line-height:16px;font-size:12px;color:#000">139</span>
<span class="t" style="letter-spacing:-0.447px;right:1267.95px;top:191px;line-height:16px;font-size:12px;color:#000">0.00</span>
<div class="gcb" style="left:681px;top:191px"></div><svg style="left:681px;top:191px" width="15" height="15" viewBox="0 0 15 15"><path d="M3.8 7 L6.3 9.8 L10.4 4.8" fill="none" stroke="#000" stroke-width="2.1"/></svg>
<span class="t" style="letter-spacing:-0.657px;left:725px;top:191px;line-height:16px;font-size:12px;color:#000">PIZZA</span>
<div class="gcb" style="left:806px;top:191px"></div>
<span class="t" style="letter-spacing:-0.447px;right:1037.95px;top:191px;line-height:16px;font-size:12px;color:#000">15.0</span>
<div class="gcb" style="left:1001.5px;top:191px"></div><svg style="left:1001.5px;top:191px" width="15" height="15" viewBox="0 0 15 15"><path d="M3.8 7 L6.3 9.8 L10.4 4.8" fill="none" stroke="#000" stroke-width="2.1"/></svg>
<span class="t" style="letter-spacing:-0.074px;left:1035px;top:191px;line-height:16px;font-size:12px;color:#000">Ano</span>
<div class="gcb" style="left:1157px;top:191px"></div>
<span class="t" style="left:1294.5px;top:191px;line-height:16px;font-size:12px;color:#000">0</span>
<div style="left:204px;top:208px;width:1288px;height:18px;background:#f5f5f5;border-bottom:1px solid #c9c9c9"></div>
<div class="gcb" style="left:210px;top:209px"></div>
<span class="t" style="letter-spacing:-0.334px;left:232px;top:209px;line-height:16px;font-size:12px;color:#000">005</span>
<span class="t" style="letter-spacing:-0.681px;left:267px;top:209px;line-height:16px;font-size:12px;color:#000">5. MARGHERITA</span>
<span class="t" style="letter-spacing:-0.582px;left:495.5px;top:209px;line-height:16px;font-size:12px;color:#000">ks</span>
<span class="t" style="letter-spacing:-0.038px;right:1347.54px;top:209px;line-height:16px;font-size:12px;color:#000">119</span>
<span class="t" style="letter-spacing:-0.038px;right:1307.54px;top:209px;line-height:16px;font-size:12px;color:#000">119</span>
<span class="t" style="letter-spacing:-0.447px;right:1267.95px;top:209px;line-height:16px;font-size:12px;color:#000">0.00</span>
<div class="gcb" style="left:681px;top:209px"></div><svg style="left:681px;top:209px" width="15" height="15" viewBox="0 0 15 15"><path d="M3.8 7 L6.3 9.8 L10.4 4.8" fill="none" stroke="#000" stroke-width="2.1"/></svg>
<span class="t" style="letter-spacing:-0.657px;left:725px;top:209px;line-height:16px;font-size:12px;color:#000">PIZZA</span>
<div class="gcb" style="left:806px;top:209px"></div>
<span class="t" style="letter-spacing:-0.447px;right:1037.95px;top:209px;line-height:16px;font-size:12px;color:#000">15.0</span>
<div class="gcb" style="left:1001.5px;top:209px"></div><svg style="left:1001.5px;top:209px" width="15" height="15" viewBox="0 0 15 15"><path d="M3.8 7 L6.3 9.8 L10.4 4.8" fill="none" stroke="#000" stroke-width="2.1"/></svg>
<span class="t" style="letter-spacing:-0.074px;left:1035px;top:209px;line-height:16px;font-size:12px;color:#000">Ano</span>
<div class="gcb" style="left:1157px;top:209px"></div>
<span class="t" style="left:1294.5px;top:209px;line-height:16px;font-size:12px;color:#000">0</span>
<div style="left:204px;top:226px;width:1288px;height:18px;background:#dcdcdc;border-bottom:1px solid #c9c9c9"></div>
<div class="gcb" style="left:210px;top:227px"></div>
<span class="t" style="letter-spacing:-0.334px;left:232px;top:227px;line-height:16px;font-size:12px;color:#000">006</span>
<span class="t" style="letter-spacing:-0.544px;left:267px;top:227px;line-height:16px;font-size:12px;color:#000">6. SALÁMOVÁ</span>
<span class="t" style="letter-spacing:-0.582px;left:495.5px;top:227px;line-height:16px;font-size:12px;color:#000">ks</span>
<span class="t" style="letter-spacing:-0.334px;right:1347.83px;top:227px;line-height:16px;font-size:12px;color:#000">149</span>
<span class="t" style="letter-spacing:-0.334px;right:1307.83px;top:227px;line-height:16px;font-size:12px;color:#000">149</span>
<span class="t" style="letter-spacing:-0.447px;right:1267.95px;top:227px;line-height:16px;font-size:12px;color:#000">0.00</span>
<div class="gcb" style="left:681px;top:227px"></div><svg style="left:681px;top:227px" width="15" height="15" viewBox="0 0 15 15"><path d="M3.8 7 L6.3 9.8 L10.4 4.8" fill="none" stroke="#000" stroke-width="2.1"/></svg>
<span class="t" style="letter-spacing:-0.657px;left:725px;top:227px;line-height:16px;font-size:12px;color:#000">PIZZA</span>
<div class="gcb" style="left:806px;top:227px"></div>
<span class="t" style="letter-spacing:-0.447px;right:1037.95px;top:227px;line-height:16px;font-size:12px;color:#000">15.0</span>
<div class="gcb" style="left:1001.5px;top:227px"></div><svg style="left:1001.5px;top:227px" width="15" height="15" viewBox="0 0 15 15"><path d="M3.8 7 L6.3 9.8 L10.4 4.8" fill="none" stroke="#000" stroke-width="2.1"/></svg>
<span class="t" style="letter-spacing:-0.074px;left:1035px;top:227px;line-height:16px;font-size:12px;color:#000">Ano</span>
<div class="gcb" style="left:1157px;top:227px"></div>
<span class="t" style="left:1294.5px;top:227px;line-height:16px;font-size:12px;color:#000">0</span>
<div style="left:204px;top:244px;width:1288px;height:18px;background:#f5f5f5;border-bottom:1px solid #c9c9c9"></div>
<div class="gcb" style="left:210px;top:245px"></div>
<span class="t" style="letter-spacing:-0.334px;left:232px;top:245px;line-height:16px;font-size:12px;color:#000">007</span>
<span class="t" style="letter-spacing:-0.894px;left:267px;top:245px;line-height:16px;font-size:12px;color:#000">7. STUDENTSKÁ</span>
<span class="t" style="letter-spacing:-0.582px;left:495.5px;top:245px;line-height:16px;font-size:12px;color:#000">ks</span>
<span class="t" style="letter-spacing:-0.334px;right:1347.83px;top:245px;line-height:16px;font-size:12px;color:#000">139</span>
<span class="t" style="letter-spacing:-0.334px;right:1307.83px;top:245px;line-height:16px;font-size:12px;color:#000">139</span>
<span class="t" style="letter-spacing:-0.447px;right:1267.95px;top:245px;line-height:16px;font-size:12px;color:#000">0.00</span>
<div class="gcb" style="left:681px;top:245px"></div><svg style="left:681px;top:245px" width="15" height="15" viewBox="0 0 15 15"><path d="M3.8 7 L6.3 9.8 L10.4 4.8" fill="none" stroke="#000" stroke-width="2.1"/></svg>
<span class="t" style="letter-spacing:-0.657px;left:725px;top:245px;line-height:16px;font-size:12px;color:#000">PIZZA</span>
<div class="gcb" style="left:806px;top:245px"></div>
<span class="t" style="letter-spacing:-0.447px;right:1037.95px;top:245px;line-height:16px;font-size:12px;color:#000">15.0</span>
<div class="gcb" style="left:1001.5px;top:245px"></div><svg style="left:1001.5px;top:245px" width="15" height="15" viewBox="0 0 15 15"><path d="M3.8 7 L6.3 9.8 L10.4 4.8" fill="none" stroke="#000" stroke-width="2.1"/></svg>
<span class="t" style="letter-spacing:-0.074px;left:1035px;top:245px;line-height:16px;font-size:12px;color:#000">Ano</span>
<div class="gcb" style="left:1157px;top:245px"></div>
<span class="t" style="left:1294.5px;top:245px;line-height:16px;font-size:12px;color:#000">0</span>
<div style="left:204px;top:262px;width:1288px;height:18px;background:#dcdcdc;border-bottom:1px solid #c9c9c9"></div>
<div class="gcb" style="left:210px;top:263px"></div>
<span class="t" style="letter-spacing:-0.334px;left:232px;top:263px;line-height:16px;font-size:12px;color:#000">008</span>
<span class="t" style="letter-spacing:-0.740px;left:267px;top:263px;line-height:16px;font-size:12px;color:#000">8. VALAŠSKÁ</span>
<span class="t" style="letter-spacing:-0.582px;left:495.5px;top:263px;line-height:16px;font-size:12px;color:#000">ks</span>
<span class="t" style="letter-spacing:-0.334px;right:1347.83px;top:263px;line-height:16px;font-size:12px;color:#000">139</span>
<span class="t" style="letter-spacing:-0.334px;right:1307.83px;top:263px;line-height:16px;font-size:12px;color:#000">139</span>
<span class="t" style="letter-spacing:-0.447px;right:1267.95px;top:263px;line-height:16px;font-size:12px;color:#000">0.00</span>
<div class="gcb" style="left:681px;top:263px"></div><svg style="left:681px;top:263px" width="15" height="15" viewBox="0 0 15 15"><path d="M3.8 7 L6.3 9.8 L10.4 4.8" fill="none" stroke="#000" stroke-width="2.1"/></svg>
<span class="t" style="letter-spacing:-0.657px;left:725px;top:263px;line-height:16px;font-size:12px;color:#000">PIZZA</span>
<div class="gcb" style="left:806px;top:263px"></div>
<span class="t" style="letter-spacing:-0.447px;right:1037.95px;top:263px;line-height:16px;font-size:12px;color:#000">15.0</span>
<div class="gcb" style="left:1001.5px;top:263px"></div><svg style="left:1001.5px;top:263px" width="15" height="15" viewBox="0 0 15 15"><path d="M3.8 7 L6.3 9.8 L10.4 4.8" fill="none" stroke="#000" stroke-width="2.1"/></svg>
<span class="t" style="letter-spacing:-0.074px;left:1035px;top:263px;line-height:16px;font-size:12px;color:#000">Ano</span>
<div class="gcb" style="left:1157px;top:263px"></div>
<span class="t" style="left:1294.5px;top:263px;line-height:16px;font-size:12px;color:#000">0</span>
<div style="left:204px;top:280px;width:1288px;height:18px;background:#f5f5f5;border-bottom:1px solid #c9c9c9"></div>
<div class="gcb" style="left:210px;top:281px"></div>
<span class="t" style="letter-spacing:-0.334px;left:232px;top:281px;line-height:16px;font-size:12px;color:#000">009</span>
<span class="t" style="letter-spacing:-0.455px;left:267px;top:281px;line-height:16px;font-size:12px;color:#000">9. QUASIMODO</span>
<span class="t" style="letter-spacing:-0.582px;left:495.5px;top:281px;line-height:16px;font-size:12px;color:#000">ks</span>
<span class="t" style="letter-spacing:-0.334px;right:1347.83px;top:281px;line-height:16px;font-size:12px;color:#000">159</span>
<span class="t" style="letter-spacing:-0.334px;right:1307.83px;top:281px;line-height:16px;font-size:12px;color:#000">159</span>
<span class="t" style="letter-spacing:-0.447px;right:1267.95px;top:281px;line-height:16px;font-size:12px;color:#000">0.00</span>
<div class="gcb" style="left:681px;top:281px"></div><svg style="left:681px;top:281px" width="15" height="15" viewBox="0 0 15 15"><path d="M3.8 7 L6.3 9.8 L10.4 4.8" fill="none" stroke="#000" stroke-width="2.1"/></svg>
<span class="t" style="letter-spacing:-0.657px;left:725px;top:281px;line-height:16px;font-size:12px;color:#000">PIZZA</span>
<div class="gcb" style="left:806px;top:281px"></div>
<span class="t" style="letter-spacing:-0.447px;right:1037.95px;top:281px;line-height:16px;font-size:12px;color:#000">15.0</span>
<div class="gcb" style="left:1001.5px;top:281px"></div><svg style="left:1001.5px;top:281px" width="15" height="15" viewBox="0 0 15 15"><path d="M3.8 7 L6.3 9.8 L10.4 4.8" fill="none" stroke="#000" stroke-width="2.1"/></svg>
<span class="t" style="letter-spacing:-0.074px;left:1035px;top:281px;line-height:16px;font-size:12px;color:#000">Ano</span>
<div class="gcb" style="left:1157px;top:281px"></div>
<span class="t" style="left:1294.5px;top:281px;line-height:16px;font-size:12px;color:#000">0</span>
<div style="left:204px;top:298px;width:1288px;height:18px;background:#dcdcdc;border-bottom:1px solid #c9c9c9"></div>
<div class="gcb" style="left:210px;top:299px"></div>
<span class="t" style="letter-spacing:-0.334px;left:232px;top:299px;line-height:16px;font-size:12px;color:#000">010</span>
<span class="t" style="letter-spacing:-0.619px;left:267px;top:299px;line-height:16px;font-size:12px;color:#000">10. VIDLÁCKÁ</span>
<span class="t" style="letter-spacing:-0.582px;left:495.5px;top:299px;line-height:16px;font-size:12px;color:#000">ks</span>
<span class="t" style="letter-spacing:-0.334px;right:1347.83px;top:299px;line-height:16px;font-size:12px;color:#000">159</span>
<span class="t" style="letter-spacing:-0.334px;right:1307.83px;top:299px;line-height:16px;font-size:12px;color:#000">159</span>
<span class="t" style="letter-spacing:-0.447px;right:1267.95px;top:299px;line-height:16px;font-size:12px;color:#000">0.00</span>
<div class="gcb" style="left:681px;top:299px"></div><svg style="left:681px;top:299px" width="15" height="15" viewBox="0 0 15 15"><path d="M3.8 7 L6.3 9.8 L10.4 4.8" fill="none" stroke="#000" stroke-width="2.1"/></svg>
<span class="t" style="letter-spacing:-0.657px;left:725px;top:299px;line-height:16px;font-size:12px;color:#000">PIZZA</span>
<div class="gcb" style="left:806px;top:299px"></div>
<span class="t" style="letter-spacing:-0.447px;right:1037.95px;top:299px;line-height:16px;font-size:12px;color:#000">15.0</span>
<div class="gcb" style="left:1001.5px;top:299px"></div><svg style="left:1001.5px;top:299px" width="15" height="15" viewBox="0 0 15 15"><path d="M3.8 7 L6.3 9.8 L10.4 4.8" fill="none" stroke="#000" stroke-width="2.1"/></svg>
<span class="t" style="letter-spacing:-0.074px;left:1035px;top:299px;line-height:16px;font-size:12px;color:#000">Ano</span>
<div class="gcb" style="left:1157px;top:299px"></div>
<span class="t" style="left:1294.5px;top:299px;line-height:16px;font-size:12px;color:#000">0</span>
<div style="left:204px;top:316px;width:1288px;height:18px;background:#f5f5f5;border-bottom:1px solid #c9c9c9"></div>
<div class="gcb" style="left:210px;top:317px"></div>
<span class="t" style="letter-spacing:-0.038px;left:232px;top:317px;line-height:16px;font-size:12px;color:#000">011</span>
<span class="t" style="letter-spacing:-0.688px;left:267px;top:317px;line-height:16px;font-size:12px;color:#000">11. BAČOVSKÁ</span>
<span class="t" style="letter-spacing:-0.582px;left:495.5px;top:317px;line-height:16px;font-size:12px;color:#000">ks</span>
<span class="t" style="letter-spacing:-0.334px;right:1347.83px;top:317px;line-height:16px;font-size:12px;color:#000">149</span>
<span class="t" style="letter-spacing:-0.334px;right:1307.83px;top:317px;line-height:16px;font-size:12px;color:#000">149</span>
<span class="t" style="letter-spacing:-0.447px;right:1267.95px;top:317px;line-height:16px;font-size:12px;color:#000">0.00</span>
<div class="gcb" style="left:681px;top:317px"></div><svg style="left:681px;top:317px" width="15" height="15" viewBox="0 0 15 15"><path d="M3.8 7 L6.3 9.8 L10.4 4.8" fill="none" stroke="#000" stroke-width="2.1"/></svg>
<span class="t" style="letter-spacing:-0.657px;left:725px;top:317px;line-height:16px;font-size:12px;color:#000">PIZZA</span>
<div class="gcb" style="left:806px;top:317px"></div>
<span class="t" style="letter-spacing:-0.447px;right:1037.95px;top:317px;line-height:16px;font-size:12px;color:#000">15.0</span>
<div class="gcb" style="left:1001.5px;top:317px"></div><svg style="left:1001.5px;top:317px" width="15" height="15" viewBox="0 0 15 15"><path d="M3.8 7 L6.3 9.8 L10.4 4.8" fill="none" stroke="#000" stroke-width="2.1"/></svg>
<span class="t" style="letter-spacing:-0.074px;left:1035px;top:317px;line-height:16px;font-size:12px;color:#000">Ano</span>
<div class="gcb" style="left:1157px;top:317px"></div>
<span class="t" style="left:1294.5px;top:317px;line-height:16px;font-size:12px;color:#000">0</span>
<div style="left:204px;top:334px;width:1288px;height:18px;background:#dcdcdc;border-bottom:1px solid #c9c9c9"></div>
<div class="gcb" style="left:210px;top:335px"></div>
<span class="t" style="letter-spacing:-0.334px;left:232px;top:335px;line-height:16px;font-size:12px;color:#000">012</span>
<span class="t" style="letter-spacing:-0.863px;left:267px;top:335px;line-height:16px;font-size:12px;color:#000">12. SEDLÁCKÁ</span>
<span class="t" style="letter-spacing:-0.582px;left:495.5px;top:335px;line-height:16px;font-size:12px;color:#000">ks</span>
<span class="t" style="letter-spacing:-0.334px;right:1347.83px;top:335px;line-height:16px;font-size:12px;color:#000">169</span>
<span class="t" style="letter-spacing:-0.334px;right:1307.83px;top:335px;line-height:16px;font-size:12px;color:#000">169</span>
<span class="t" style="letter-spacing:-0.447px;right:1267.95px;top:335px;line-height:16px;font-size:12px;color:#000">0.00</span>
<div class="gcb" style="left:681px;top:335px"></div><svg style="left:681px;top:335px" width="15" height="15" viewBox="0 0 15 15"><path d="M3.8 7 L6.3 9.8 L10.4 4.8" fill="none" stroke="#000" stroke-width="2.1"/></svg>
<span class="t" style="letter-spacing:-0.657px;left:725px;top:335px;line-height:16px;font-size:12px;color:#000">PIZZA</span>
<div class="gcb" style="left:806px;top:335px"></div>
<span class="t" style="letter-spacing:-0.447px;right:1037.95px;top:335px;line-height:16px;font-size:12px;color:#000">15.0</span>
<div class="gcb" style="left:1001.5px;top:335px"></div><svg style="left:1001.5px;top:335px" width="15" height="15" viewBox="0 0 15 15"><path d="M3.8 7 L6.3 9.8 L10.4 4.8" fill="none" stroke="#000" stroke-width="2.1"/></svg>
<span class="t" style="letter-spacing:-0.074px;left:1035px;top:335px;line-height:16px;font-size:12px;color:#000">Ano</span>
<div class="gcb" style="left:1157px;top:335px"></div>
<span class="t" style="left:1294.5px;top:335px;line-height:16px;font-size:12px;color:#000">0</span>
<div style="left:204px;top:352px;width:1288px;height:18px;background:#f5f5f5;border-bottom:1px solid #c9c9c9"></div>
<div class="gcb" style="left:210px;top:353px"></div>
<span class="t" style="letter-spacing:-0.334px;left:232px;top:353px;line-height:16px;font-size:12px;color:#000">014</span>
<span class="t" style="letter-spacing:-0.596px;left:267px;top:353px;line-height:16px;font-size:12px;color:#000">15. AL CAPONE</span>
<span class="t" style="letter-spacing:-0.582px;left:495.5px;top:353px;line-height:16px;font-size:12px;color:#000">ks</span>
<span class="t" style="letter-spacing:-0.334px;right:1347.83px;top:353px;line-height:16px;font-size:12px;color:#000">159</span>
<span class="t" style="letter-spacing:-0.334px;right:1307.83px;top:353px;line-height:16px;font-size:12px;color:#000">159</span>
<span class="t" style="letter-spacing:-0.447px;right:1267.95px;top:353px;line-height:16px;font-size:12px;color:#000">0.00</span>
<div class="gcb" style="left:681px;top:353px"></div><svg style="left:681px;top:353px" width="15" height="15" viewBox="0 0 15 15"><path d="M3.8 7 L6.3 9.8 L10.4 4.8" fill="none" stroke="#000" stroke-width="2.1"/></svg>
<span class="t" style="letter-spacing:-0.657px;left:725px;top:353px;line-height:16px;font-size:12px;color:#000">PIZZA</span>
<div class="gcb" style="left:806px;top:353px"></div>
<span class="t" style="letter-spacing:-0.447px;right:1037.95px;top:353px;line-height:16px;font-size:12px;color:#000">15.0</span>
<div class="gcb" style="left:1001.5px;top:353px"></div><svg style="left:1001.5px;top:353px" width="15" height="15" viewBox="0 0 15 15"><path d="M3.8 7 L6.3 9.8 L10.4 4.8" fill="none" stroke="#000" stroke-width="2.1"/></svg>
<span class="t" style="letter-spacing:-0.074px;left:1035px;top:353px;line-height:16px;font-size:12px;color:#000">Ano</span>
<div class="gcb" style="left:1157px;top:353px"></div>
<span class="t" style="left:1294.5px;top:353px;line-height:16px;font-size:12px;color:#000">0</span>
<div style="left:204px;top:370px;width:1288px;height:18px;background:#dcdcdc;border-bottom:1px solid #c9c9c9"></div>
<div class="gcb" style="left:210px;top:371px"></div>
<span class="t" style="letter-spacing:-0.334px;left:232px;top:371px;line-height:16px;font-size:12px;color:#000">015</span>
<span class="t" style="letter-spacing:-0.469px;left:267px;top:371px;line-height:16px;font-size:12px;color:#000">16. SOLO MIO</span>
<span class="t" style="letter-spacing:-0.582px;left:495.5px;top:371px;line-height:16px;font-size:12px;color:#000">ks</span>
<span class="t" style="letter-spacing:-0.334px;right:1347.83px;top:371px;line-height:16px;font-size:12px;color:#000">169</span>
<span class="t" style="letter-spacing:-0.334px;right:1307.83px;top:371px;line-height:16px;font-size:12px;color:#000">169</span>
<span class="t" style="letter-spacing:-0.447px;right:1267.95px;top:371px;line-height:16px;font-size:12px;color:#000">0.00</span>
<div class="gcb" style="left:681px;top:371px"></div><svg style="left:681px;top:371px" width="15" height="15" viewBox="0 0 15 15"><path d="M3.8 7 L6.3 9.8 L10.4 4.8" fill="none" stroke="#000" stroke-width="2.1"/></svg>
<span class="t" style="letter-spacing:-0.657px;left:725px;top:371px;line-height:16px;font-size:12px;color:#000">PIZZA</span>
<div class="gcb" style="left:806px;top:371px"></div>
<span class="t" style="letter-spacing:-0.447px;right:1037.95px;top:371px;line-height:16px;font-size:12px;color:#000">15.0</span>
<div class="gcb" style="left:1001.5px;top:371px"></div><svg style="left:1001.5px;top:371px" width="15" height="15" viewBox="0 0 15 15"><path d="M3.8 7 L6.3 9.8 L10.4 4.8" fill="none" stroke="#000" stroke-width="2.1"/></svg>
<span class="t" style="letter-spacing:-0.074px;left:1035px;top:371px;line-height:16px;font-size:12px;color:#000">Ano</span>
<div class="gcb" style="left:1157px;top:371px"></div>
<span class="t" style="left:1294.5px;top:371px;line-height:16px;font-size:12px;color:#000">0</span>
<div style="left:204px;top:388px;width:1288px;height:18px;background:#f5f5f5;border-bottom:1px solid #c9c9c9"></div>
<div class="gcb" style="left:210px;top:389px"></div>
<span class="t" style="letter-spacing:-0.334px;left:232px;top:389px;line-height:16px;font-size:12px;color:#000">016</span>
<span class="t" style="letter-spacing:-0.551px;left:267px;top:389px;line-height:16px;font-size:12px;color:#000">17. MIX GRIL</span>
<span class="t" style="letter-spacing:-0.582px;left:495.5px;top:389px;line-height:16px;font-size:12px;color:#000">ks</span>
<span class="t" style="letter-spacing:-0.334px;right:1347.83px;top:389px;line-height:16px;font-size:12px;color:#000">179</span>
<span class="t" style="letter-spacing:-0.334px;right:1307.83px;top:389px;line-height:16px;font-size:12px;color:#000">179</span>
<span class="t" style="letter-spacing:-0.447px;right:1267.95px;top:389px;line-height:16px;font-size:12px;color:#000">0.00</span>
<div class="gcb" style="left:681px;top:389px"></div><svg style="left:681px;top:389px" width="15" height="15" viewBox="0 0 15 15"><path d="M3.8 7 L6.3 9.8 L10.4 4.8" fill="none" stroke="#000" stroke-width="2.1"/></svg>
<span class="t" style="letter-spacing:-0.657px;left:725px;top:389px;line-height:16px;font-size:12px;color:#000">PIZZA</span>
<div class="gcb" style="left:806px;top:389px"></div>
<span class="t" style="letter-spacing:-0.447px;right:1037.95px;top:389px;line-height:16px;font-size:12px;color:#000">15.0</span>
<div class="gcb" style="left:1001.5px;top:389px"></div><svg style="left:1001.5px;top:389px" width="15" height="15" viewBox="0 0 15 15"><path d="M3.8 7 L6.3 9.8 L10.4 4.8" fill="none" stroke="#000" stroke-width="2.1"/></svg>
<span class="t" style="letter-spacing:-0.074px;left:1035px;top:389px;line-height:16px;font-size:12px;color:#000">Ano</span>
<div class="gcb" style="left:1157px;top:389px"></div>
<span class="t" style="left:1294.5px;top:389px;line-height:16px;font-size:12px;color:#000">0</span>
<div style="left:204px;top:406px;width:1288px;height:18px;background:#dcdcdc;border-bottom:1px solid #c9c9c9"></div>
<div class="gcb" style="left:210px;top:407px"></div>
<span class="t" style="letter-spacing:-0.334px;left:232px;top:407px;line-height:16px;font-size:12px;color:#000">017</span>
<span class="t" style="letter-spacing:-0.860px;left:267px;top:407px;line-height:16px;font-size:12px;color:#000">18. KUŘECÍ</span>
<span class="t" style="letter-spacing:-0.582px;left:495.5px;top:407px;line-height:16px;font-size:12px;color:#000">ks</span>
<span class="t" style="letter-spacing:-0.334px;right:1347.83px;top:407px;line-height:16px;font-size:12px;color:#000">139</span>
<span class="t" style="letter-spacing:-0.334px;right:1307.83px;top:407px;line-height:16px;font-size:12px;color:#000">139</span>
<span class="t" style="letter-spacing:-0.447px;right:1267.95px;top:407px;line-height:16px;font-size:12px;color:#000">0.00</span>
<div class="gcb" style="left:681px;top:407px"></div><svg style="left:681px;top:407px" width="15" height="15" viewBox="0 0 15 15"><path d="M3.8 7 L6.3 9.8 L10.4 4.8" fill="none" stroke="#000" stroke-width="2.1"/></svg>
<span class="t" style="letter-spacing:-0.657px;left:725px;top:407px;line-height:16px;font-size:12px;color:#000">PIZZA</span>
<div class="gcb" style="left:806px;top:407px"></div>
<span class="t" style="letter-spacing:-0.447px;right:1037.95px;top:407px;line-height:16px;font-size:12px;color:#000">15.0</span>
<div class="gcb" style="left:1001.5px;top:407px"></div><svg style="left:1001.5px;top:407px" width="15" height="15" viewBox="0 0 15 15"><path d="M3.8 7 L6.3 9.8 L10.4 4.8" fill="none" stroke="#000" stroke-width="2.1"/></svg>
<span class="t" style="letter-spacing:-0.074px;left:1035px;top:407px;line-height:16px;font-size:12px;color:#000">Ano</span>
<div class="gcb" style="left:1157px;top:407px"></div>
<span class="t" style="left:1294.5px;top:407px;line-height:16px;font-size:12px;color:#000">0</span>
<div style="left:204px;top:424px;width:1288px;height:18px;background:#f5f5f5;border-bottom:1px solid #c9c9c9"></div>
<div class="gcb" style="left:210px;top:425px"></div>
<span class="t" style="letter-spacing:-0.334px;left:232px;top:425px;line-height:16px;font-size:12px;color:#000">018</span>
<span class="t" style="letter-spacing:-0.811px;left:267px;top:425px;line-height:16px;font-size:12px;color:#000">19. VEPŘOVÁ</span>
<span class="t" style="letter-spacing:-0.582px;left:495.5px;top:425px;line-height:16px;font-size:12px;color:#000">ks</span>
<span class="t" style="letter-spacing:-0.334px;right:1347.83px;top:425px;line-height:16px;font-size:12px;color:#000">149</span>
<span class="t" style="letter-spacing:-0.334px;right:1307.83px;top:425px;line-height:16px;font-size:12px;color:#000">149</span>
<span class="t" style="letter-spacing:-0.447px;right:1267.95px;top:425px;line-height:16px;font-size:12px;color:#000">0.00</span>
<div class="gcb" style="left:681px;top:425px"></div><svg style="left:681px;top:425px" width="15" height="15" viewBox="0 0 15 15"><path d="M3.8 7 L6.3 9.8 L10.4 4.8" fill="none" stroke="#000" stroke-width="2.1"/></svg>
<span class="t" style="letter-spacing:-0.657px;left:725px;top:425px;line-height:16px;font-size:12px;color:#000">PIZZA</span>
<div class="gcb" style="left:806px;top:425px"></div>
<span class="t" style="letter-spacing:-0.447px;right:1037.95px;top:425px;line-height:16px;font-size:12px;color:#000">15.0</span>
<div class="gcb" style="left:1001.5px;top:425px"></div><svg style="left:1001.5px;top:425px" width="15" height="15" viewBox="0 0 15 15"><path d="M3.8 7 L6.3 9.8 L10.4 4.8" fill="none" stroke="#000" stroke-width="2.1"/></svg>
<span class="t" style="letter-spacing:-0.074px;left:1035px;top:425px;line-height:16px;font-size:12px;color:#000">Ano</span>
<div class="gcb" style="left:1157px;top:425px"></div>
<span class="t" style="left:1294.5px;top:425px;line-height:16px;font-size:12px;color:#000">0</span>
<div style="left:204px;top:442px;width:1288px;height:18px;background:#dcdcdc;border-bottom:1px solid #c9c9c9"></div>
<div class="gcb" style="left:210px;top:443px"></div>
<span class="t" style="letter-spacing:-0.334px;left:232px;top:443px;line-height:16px;font-size:12px;color:#000">019</span>
<span class="t" style="letter-spacing:-0.600px;left:267px;top:443px;line-height:16px;font-size:12px;color:#000">20. VASCO</span>
<span class="t" style="letter-spacing:-0.582px;left:495.5px;top:443px;line-height:16px;font-size:12px;color:#000">ks</span>
<span class="t" style="letter-spacing:-0.334px;right:1347.83px;top:443px;line-height:16px;font-size:12px;color:#000">159</span>
<span class="t" style="letter-spacing:-0.334px;right:1307.83px;top:443px;line-height:16px;font-size:12px;color:#000">159</span>
<span class="t" style="letter-spacing:-0.447px;right:1267.95px;top:443px;line-height:16px;font-size:12px;color:#000">0.00</span>
<div class="gcb" style="left:681px;top:443px"></div><svg style="left:681px;top:443px" width="15" height="15" viewBox="0 0 15 15"><path d="M3.8 7 L6.3 9.8 L10.4 4.8" fill="none" stroke="#000" stroke-width="2.1"/></svg>
<span class="t" style="letter-spacing:-0.657px;left:725px;top:443px;line-height:16px;font-size:12px;color:#000">PIZZA</span>
<div class="gcb" style="left:806px;top:443px"></div>
<span class="t" style="letter-spacing:-0.447px;right:1037.95px;top:443px;line-height:16px;font-size:12px;color:#000">15.0</span>
<div class="gcb" style="left:1001.5px;top:443px"></div><svg style="left:1001.5px;top:443px" width="15" height="15" viewBox="0 0 15 15"><path d="M3.8 7 L6.3 9.8 L10.4 4.8" fill="none" stroke="#000" stroke-width="2.1"/></svg>
<span class="t" style="letter-spacing:-0.074px;left:1035px;top:443px;line-height:16px;font-size:12px;color:#000">Ano</span>
<div class="gcb" style="left:1157px;top:443px"></div>
<span class="t" style="left:1294.5px;top:443px;line-height:16px;font-size:12px;color:#000">0</span>
<div style="left:204px;top:460px;width:1288px;height:18px;background:#ea7172;border-bottom:1px solid #d9868c"></div>
<div style="left:265px;top:460px;width:226px;height:17px;background:#0078d7"></div>
<div class="gcb" style="left:210px;top:461px"></div>
<span class="t" style="letter-spacing:-0.334px;left:232px;top:461px;line-height:16px;font-size:12px;color:#fff">020</span>
<span class="t" style="letter-spacing:-0.595px;left:267px;top:461px;line-height:16px;font-size:12px;color:#fff">21. ŠUNKOVÁ</span>
<span class="t" style="letter-spacing:-0.582px;left:495.5px;top:461px;line-height:16px;font-size:12px;color:#fff">ks</span>
<span class="t" style="letter-spacing:-0.334px;right:1347.83px;top:461px;line-height:16px;font-size:12px;color:#fff">129</span>
<span class="t" style="letter-spacing:-0.334px;right:1307.83px;top:461px;line-height:16px;font-size:12px;color:#fff">129</span>
<span class="t" style="letter-spacing:-0.447px;right:1267.95px;top:461px;line-height:16px;font-size:12px;color:#fff">0.00</span>
<div class="gcb" style="left:681px;top:461px"></div><svg style="left:681px;top:461px" width="15" height="15" viewBox="0 0 15 15"><path d="M3.8 7 L6.3 9.8 L10.4 4.8" fill="none" stroke="#000" stroke-width="2.1"/></svg>
<span class="t" style="letter-spacing:-0.657px;left:725px;top:461px;line-height:16px;font-size:12px;color:#fff">PIZZA</span>
<div class="gcb" style="left:806px;top:461px"></div>
<span class="t" style="letter-spacing:-0.447px;right:1037.95px;top:461px;line-height:16px;font-size:12px;color:#fff">15.0</span>
<div class="gcb" style="left:1001.5px;top:461px"></div><svg style="left:1001.5px;top:461px" width="15" height="15" viewBox="0 0 15 15"><path d="M3.8 7 L6.3 9.8 L10.4 4.8" fill="none" stroke="#000" stroke-width="2.1"/></svg>
<span class="t" style="letter-spacing:-0.074px;left:1035px;top:461px;line-height:16px;font-size:12px;color:#fff">Ano</span>
<div class="gcb" style="left:1157px;top:461px"></div>
<span class="t" style="left:1294.5px;top:461px;line-height:16px;font-size:12px;color:#fff">0</span>
<div style="left:204px;top:478px;width:1288px;height:18px;background:#dcdcdc;border-bottom:1px solid #c9c9c9"></div>
<div class="gcb" style="left:210px;top:479px"></div>
<span class="t" style="letter-spacing:-0.334px;left:232px;top:479px;line-height:16px;font-size:12px;color:#000">021</span>
<span class="t" style="letter-spacing:-0.398px;left:267px;top:479px;line-height:16px;font-size:12px;color:#000">22. ŽAMPIONOVÁ</span>
<span class="t" style="letter-spacing:-0.582px;left:495.5px;top:479px;line-height:16px;font-size:12px;color:#000">ks</span>
<span class="t" style="letter-spacing:-0.334px;right:1347.83px;top:479px;line-height:16px;font-size:12px;color:#000">139</span>
<span class="t" style="letter-spacing:-0.334px;right:1307.83px;top:479px;line-height:16px;font-size:12px;color:#000">139</span>
<span class="t" style="letter-spacing:-0.447px;right:1267.95px;top:479px;line-height:16px;font-size:12px;color:#000">0.00</span>
<div class="gcb" style="left:681px;top:479px"></div><svg style="left:681px;top:479px" width="15" height="15" viewBox="0 0 15 15"><path d="M3.8 7 L6.3 9.8 L10.4 4.8" fill="none" stroke="#000" stroke-width="2.1"/></svg>
<span class="t" style="letter-spacing:-0.657px;left:725px;top:479px;line-height:16px;font-size:12px;color:#000">PIZZA</span>
<div class="gcb" style="left:806px;top:479px"></div>
<span class="t" style="letter-spacing:-0.447px;right:1037.95px;top:479px;line-height:16px;font-size:12px;color:#000">15.0</span>
<div class="gcb" style="left:1001.5px;top:479px"></div><svg style="left:1001.5px;top:479px" width="15" height="15" viewBox="0 0 15 15"><path d="M3.8 7 L6.3 9.8 L10.4 4.8" fill="none" stroke="#000" stroke-width="2.1"/></svg>
<span class="t" style="letter-spacing:-0.074px;left:1035px;top:479px;line-height:16px;font-size:12px;color:#000">Ano</span>
<div class="gcb" style="left:1157px;top:479px"></div>
<span class="t" style="left:1294.5px;top:479px;line-height:16px;font-size:12px;color:#000">0</span>
<div style="left:204px;top:496px;width:1288px;height:18px;background:#f5f5f5;border-bottom:1px solid #c9c9c9"></div>
<div class="gcb" style="left:210px;top:497px"></div>
<span class="t" style="letter-spacing:-0.334px;left:232px;top:497px;line-height:16px;font-size:12px;color:#000">022</span>
<span class="t" style="letter-spacing:-0.493px;left:267px;top:497px;line-height:16px;font-size:12px;color:#000">23. SLANINOVÁ</span>
<span class="t" style="letter-spacing:-0.582px;left:495.5px;top:497px;line-height:16px;font-size:12px;color:#000">ks</span>
<span class="t" style="letter-spacing:-0.334px;right:1347.83px;top:497px;line-height:16px;font-size:12px;color:#000">149</span>
<span class="t" style="letter-spacing:-0.334px;right:1307.83px;top:497px;line-height:16px;font-size:12px;color:#000">149</span>
<span class="t" style="letter-spacing:-0.447px;right:1267.95px;top:497px;line-height:16px;font-size:12px;color:#000">0.00</span>
<div class="gcb" style="left:681px;top:497px"></div><svg style="left:681px;top:497px" width="15" height="15" viewBox="0 0 15 15"><path d="M3.8 7 L6.3 9.8 L10.4 4.8" fill="none" stroke="#000" stroke-width="2.1"/></svg>
<span class="t" style="letter-spacing:-0.657px;left:725px;top:497px;line-height:16px;font-size:12px;color:#000">PIZZA</span>
<div class="gcb" style="left:806px;top:497px"></div>
<span class="t" style="letter-spacing:-0.447px;right:1037.95px;top:497px;line-height:16px;font-size:12px;color:#000">15.0</span>
<div class="gcb" style="left:1001.5px;top:497px"></div><svg style="left:1001.5px;top:497px" width="15" height="15" viewBox="0 0 15 15"><path d="M3.8 7 L6.3 9.8 L10.4 4.8" fill="none" stroke="#000" stroke-width="2.1"/></svg>
<span class="t" style="letter-spacing:-0.074px;left:1035px;top:497px;line-height:16px;font-size:12px;color:#000">Ano</span>
<div class="gcb" style="left:1157px;top:497px"></div>
<span class="t" style="left:1294.5px;top:497px;line-height:16px;font-size:12px;color:#000">0</span>
<div style="left:204px;top:514px;width:1288px;height:18px;background:#dcdcdc;border-bottom:1px solid #c9c9c9"></div>
<div class="gcb" style="left:210px;top:515px"></div>
<span class="t" style="letter-spacing:-0.334px;left:232px;top:515px;line-height:16px;font-size:12px;color:#000">023</span>
<span class="t" style="letter-spacing:-0.740px;left:267px;top:515px;line-height:16px;font-size:12px;color:#000">24. ŠPENÁTOVÁ</span>
<span class="t" style="letter-spacing:-0.582px;left:495.5px;top:515px;line-height:16px;font-size:12px;color:#000">ks</span>
<span class="t" style="letter-spacing:-0.334px;right:1347.83px;top:515px;line-height:16px;font-size:12px;color:#000">149</span>
<span class="t" style="letter-spacing:-0.334px;right:1307.83px;top:515px;line-height:16px;font-size:12px;color:#000">149</span>
<span class="t" style="letter-spacing:-0.447px;right:1267.95px;top:515px;line-height:16px;font-size:12px;color:#000">0.00</span>
<div class="gcb" style="left:681px;top:515px"></div><svg style="left:681px;top:515px" width="15" height="15" viewBox="0 0 15 15"><path d="M3.8 7 L6.3 9.8 L10.4 4.8" fill="none" stroke="#000" stroke-width="2.1"/></svg>
<span class="t" style="letter-spacing:-0.657px;left:725px;top:515px;line-height:16px;font-size:12px;color:#000">PIZZA</span>
<div class="gcb" style="left:806px;top:515px"></div>
<span class="t" style="letter-spacing:-0.447px;right:1037.95px;top:515px;line-height:16px;font-size:12px;color:#000">15.0</span>
<div class="gcb" style="left:1001.5px;top:515px"></div><svg style="left:1001.5px;top:515px" width="15" height="15" viewBox="0 0 15 15"><path d="M3.8 7 L6.3 9.8 L10.4 4.8" fill="none" stroke="#000" stroke-width="2.1"/></svg>
<span class="t" style="letter-spacing:-0.074px;left:1035px;top:515px;line-height:16px;font-size:12px;color:#000">Ano</span>
<div class="gcb" style="left:1157px;top:515px"></div>
<span class="t" style="left:1294.5px;top:515px;line-height:16px;font-size:12px;color:#000">0</span>
<div style="left:204px;top:532px;width:1288px;height:18px;background:#f5f5f5;border-bottom:1px solid #c9c9c9"></div>
<div class="gcb" style="left:210px;top:533px"></div>
<span class="t" style="letter-spacing:-0.334px;left:232px;top:533px;line-height:16px;font-size:12px;color:#000">024</span>
<span class="t" style="letter-spacing:-0.724px;left:267px;top:533px;line-height:16px;font-size:12px;color:#000">25.ČTYŘI ROČNÍ OBDOBÍ</span>
<span class="t" style="letter-spacing:-0.582px;left:495.5px;top:533px;line-height:16px;font-size:12px;color:#000">ks</span>
<span class="t" style="letter-spacing:-0.334px;right:1347.83px;top:533px;line-height:16px;font-size:12px;color:#000">149</span>
<span class="t" style="letter-spacing:-0.334px;right:1307.83px;top:533px;line-height:16px;font-size:12px;color:#000">149</span>
<span class="t" style="letter-spacing:-0.447px;right:1267.95px;top:533px;line-height:16px;font-size:12px;color:#000">0.00</span>
<div class="gcb" style="left:681px;top:533px"></div><svg style="left:681px;top:533px" width="15" height="15" viewBox="0 0 15 15"><path d="M3.8 7 L6.3 9.8 L10.4 4.8" fill="none" stroke="#000" stroke-width="2.1"/></svg>
<span class="t" style="letter-spacing:-0.657px;left:725px;top:533px;line-height:16px;font-size:12px;color:#000">PIZZA</span>
<div class="gcb" style="left:806px;top:533px"></div>
<span class="t" style="letter-spacing:-0.447px;right:1037.95px;top:533px;line-height:16px;font-size:12px;color:#000">15.0</span>
<div class="gcb" style="left:1001.5px;top:533px"></div><svg style="left:1001.5px;top:533px" width="15" height="15" viewBox="0 0 15 15"><path d="M3.8 7 L6.3 9.8 L10.4 4.8" fill="none" stroke="#000" stroke-width="2.1"/></svg>
<span class="t" style="letter-spacing:-0.074px;left:1035px;top:533px;line-height:16px;font-size:12px;color:#000">Ano</span>
<div class="gcb" style="left:1157px;top:533px"></div>
<span class="t" style="left:1294.5px;top:533px;line-height:16px;font-size:12px;color:#000">0</span>
<div style="left:204px;top:550px;width:1288px;height:18px;background:#dcdcdc;border-bottom:1px solid #c9c9c9"></div>
<div class="gcb" style="left:210px;top:551px"></div>
<span class="t" style="letter-spacing:-0.334px;left:232px;top:551px;line-height:16px;font-size:12px;color:#000">025</span>
<span class="t" style="letter-spacing:-0.804px;left:267px;top:551px;line-height:16px;font-size:12px;color:#000">26. KRÁLOVSKÁ</span>
<span class="t" style="letter-spacing:-0.582px;left:495.5px;top:551px;line-height:16px;font-size:12px;color:#000">ks</span>
<span class="t" style="letter-spacing:-0.334px;right:1347.83px;top:551px;line-height:16px;font-size:12px;color:#000">169</span>
<span class="t" style="letter-spacing:-0.334px;right:1307.83px;top:551px;line-height:16px;font-size:12px;color:#000">169</span>
<span class="t" style="letter-spacing:-0.447px;right:1267.95px;top:551px;line-height:16px;font-size:12px;color:#000">0.00</span>
<div class="gcb" style="left:681px;top:551px"></div><svg style="left:681px;top:551px" width="15" height="15" viewBox="0 0 15 15"><path d="M3.8 7 L6.3 9.8 L10.4 4.8" fill="none" stroke="#000" stroke-width="2.1"/></svg>
<span class="t" style="letter-spacing:-0.657px;left:725px;top:551px;line-height:16px;font-size:12px;color:#000">PIZZA</span>
<div class="gcb" style="left:806px;top:551px"></div>
<span class="t" style="letter-spacing:-0.447px;right:1037.95px;top:551px;line-height:16px;font-size:12px;color:#000">15.0</span>
<div class="gcb" style="left:1001.5px;top:551px"></div><svg style="left:1001.5px;top:551px" width="15" height="15" viewBox="0 0 15 15"><path d="M3.8 7 L6.3 9.8 L10.4 4.8" fill="none" stroke="#000" stroke-width="2.1"/></svg>
<span class="t" style="letter-spacing:-0.074px;left:1035px;top:551px;line-height:16px;font-size:12px;color:#000">Ano</span>
<div class="gcb" style="left:1157px;top:551px"></div>
<span class="t" style="left:1294.5px;top:551px;line-height:16px;font-size:12px;color:#000">0</span>
<div style="left:204px;top:568px;width:1288px;height:18px;background:#f5f5f5;border-bottom:1px solid #c9c9c9"></div>
<div class="gcb" style="left:210px;top:569px"></div>
<span class="t" style="letter-spacing:-0.334px;left:232px;top:569px;line-height:16px;font-size:12px;color:#000">026</span>
<span class="t" style="letter-spacing:-0.541px;left:267px;top:569px;line-height:16px;font-size:12px;color:#000">27. DIABOLO</span>
<span class="t" style="letter-spacing:-0.582px;left:495.5px;top:569px;line-height:16px;font-size:12px;color:#000">ks</span>
<span class="t" style="letter-spacing:-0.334px;right:1347.83px;top:569px;line-height:16px;font-size:12px;color:#000">149</span>
<span class="t" style="letter-spacing:-0.334px;right:1307.83px;top:569px;line-height:16px;font-size:12px;color:#000">149</span>
<span class="t" style="letter-spacing:-0.447px;right:1267.95px;top:569px;line-height:16px;font-size:12px;color:#000">0.00</span>
<div class="gcb" style="left:681px;top:569px"></div><svg style="left:681px;top:569px" width="15" height="15" viewBox="0 0 15 15"><path d="M3.8 7 L6.3 9.8 L10.4 4.8" fill="none" stroke="#000" stroke-width="2.1"/></svg>
<span class="t" style="letter-spacing:-0.657px;left:725px;top:569px;line-height:16px;font-size:12px;color:#000">PIZZA</span>
<div class="gcb" style="left:806px;top:569px"></div>
<span class="t" style="letter-spacing:-0.447px;right:1037.95px;top:569px;line-height:16px;font-size:12px;color:#000">15.0</span>
<div class="gcb" style="left:1001.5px;top:569px"></div><svg style="left:1001.5px;top:569px" width="15" height="15" viewBox="0 0 15 15"><path d="M3.8 7 L6.3 9.8 L10.4 4.8" fill="none" stroke="#000" stroke-width="2.1"/></svg>
<span class="t" style="letter-spacing:-0.074px;left:1035px;top:569px;line-height:16px;font-size:12px;color:#000">Ano</span>
<div class="gcb" style="left:1157px;top:569px"></div>
<span class="t" style="left:1294.5px;top:569px;line-height:16px;font-size:12px;color:#000">0</span>
<div style="left:204px;top:586px;width:1288px;height:18px;background:#dcdcdc;border-bottom:1px solid #c9c9c9"></div>
<div class="gcb" style="left:210px;top:587px"></div>
<span class="t" style="letter-spacing:-0.334px;left:232px;top:587px;line-height:16px;font-size:12px;color:#000">027</span>
<span class="t" style="letter-spacing:-0.923px;left:267px;top:587px;line-height:16px;font-size:12px;color:#000">28. LUCIFER</span>
<span class="t" style="letter-spacing:-0.582px;left:495.5px;top:587px;line-height:16px;font-size:12px;color:#000">ks</span>
<span class="t" style="letter-spacing:-0.334px;right:1347.83px;top:587px;line-height:16px;font-size:12px;color:#000">149</span>
<span class="t" style="letter-spacing:-0.334px;right:1307.83px;top:587px;line-height:16px;font-size:12px;color:#000">149</span>
<span class="t" style="letter-spacing:-0.447px;right:1267.95px;top:587px;line-height:16px;font-size:12px;color:#000">0.00</span>
<div class="gcb" style="left:681px;top:587px"></div><svg style="left:681px;top:587px" width="15" height="15" viewBox="0 0 15 15"><path d="M3.8 7 L6.3 9.8 L10.4 4.8" fill="none" stroke="#000" stroke-width="2.1"/></svg>
<span class="t" style="letter-spacing:-0.657px;left:725px;top:587px;line-height:16px;font-size:12px;color:#000">PIZZA</span>
<div class="gcb" style="left:806px;top:587px"></div>
<span class="t" style="letter-spacing:-0.447px;right:1037.95px;top:587px;line-height:16px;font-size:12px;color:#000">15.0</span>
<div class="gcb" style="left:1001.5px;top:587px"></div><svg style="left:1001.5px;top:587px" width="15" height="15" viewBox="0 0 15 15"><path d="M3.8 7 L6.3 9.8 L10.4 4.8" fill="none" stroke="#000" stroke-width="2.1"/></svg>
<span class="t" style="letter-spacing:-0.074px;left:1035px;top:587px;line-height:16px;font-size:12px;color:#000">Ano</span>
<div class="gcb" style="left:1157px;top:587px"></div>
<span class="t" style="left:1294.5px;top:587px;line-height:16px;font-size:12px;color:#000">0</span>
<div style="left:204px;top:604px;width:1288px;height:18px;background:#f5f5f5;border-bottom:1px solid #c9c9c9"></div>
<div class="gcb" style="left:210px;top:605px"></div>
<span class="t" style="letter-spacing:-0.334px;left:232px;top:605px;line-height:16px;font-size:12px;color:#000">028</span>
<span class="t" style="letter-spacing:-0.914px;left:267px;top:605px;line-height:16px;font-size:12px;color:#000">29. ČERTOVSKÁ</span>
<span class="t" style="letter-spacing:-0.582px;left:495.5px;top:605px;line-height:16px;font-size:12px;color:#000">ks</span>
<span class="t" style="letter-spacing:-0.334px;right:1347.83px;top:605px;line-height:16px;font-size:12px;color:#000">149</span>
<span class="t" style="letter-spacing:-0.334px;right:1307.83px;top:605px;line-height:16px;font-size:12px;color:#000">149</span>
<span class="t" style="letter-spacing:-0.447px;right:1267.95px;top:605px;line-height:16px;font-size:12px;color:#000">0.00</span>
<div class="gcb" style="left:681px;top:605px"></div><svg style="left:681px;top:605px" width="15" height="15" viewBox="0 0 15 15"><path d="M3.8 7 L6.3 9.8 L10.4 4.8" fill="none" stroke="#000" stroke-width="2.1"/></svg>
<span class="t" style="letter-spacing:-0.657px;left:725px;top:605px;line-height:16px;font-size:12px;color:#000">PIZZA</span>
<div class="gcb" style="left:806px;top:605px"></div>
<span class="t" style="letter-spacing:-0.447px;right:1037.95px;top:605px;line-height:16px;font-size:12px;color:#000">15.0</span>
<div class="gcb" style="left:1001.5px;top:605px"></div><svg style="left:1001.5px;top:605px" width="15" height="15" viewBox="0 0 15 15"><path d="M3.8 7 L6.3 9.8 L10.4 4.8" fill="none" stroke="#000" stroke-width="2.1"/></svg>
<span class="t" style="letter-spacing:-0.074px;left:1035px;top:605px;line-height:16px;font-size:12px;color:#000">Ano</span>
<div class="gcb" style="left:1157px;top:605px"></div>
<span class="t" style="left:1294.5px;top:605px;line-height:16px;font-size:12px;color:#000">0</span>
<div style="left:204px;top:622px;width:1288px;height:18px;background:#dcdcdc;border-bottom:1px solid #c9c9c9"></div>
<div class="gcb" style="left:210px;top:623px"></div>
<span class="t" style="letter-spacing:-0.334px;left:232px;top:623px;line-height:16px;font-size:12px;color:#000">029</span>
<span class="t" style="letter-spacing:-0.790px;left:267px;top:623px;line-height:16px;font-size:12px;color:#000">30. OSTRÁ KLASIKA</span>
<span class="t" style="letter-spacing:-0.582px;left:495.5px;top:623px;line-height:16px;font-size:12px;color:#000">ks</span>
<span class="t" style="letter-spacing:-0.334px;right:1347.83px;top:623px;line-height:16px;font-size:12px;color:#000">149</span>
<span class="t" style="letter-spacing:-0.334px;right:1307.83px;top:623px;line-height:16px;font-size:12px;color:#000">149</span>
<span class="t" style="letter-spacing:-0.447px;right:1267.95px;top:623px;line-height:16px;font-size:12px;color:#000">0.00</span>
<div class="gcb" style="left:681px;top:623px"></div><svg style="left:681px;top:623px" width="15" height="15" viewBox="0 0 15 15"><path d="M3.8 7 L6.3 9.8 L10.4 4.8" fill="none" stroke="#000" stroke-width="2.1"/></svg>
<span class="t" style="letter-spacing:-0.657px;left:725px;top:623px;line-height:16px;font-size:12px;color:#000">PIZZA</span>
<div class="gcb" style="left:806px;top:623px"></div>
<span class="t" style="letter-spacing:-0.447px;right:1037.95px;top:623px;line-height:16px;font-size:12px;color:#000">15.0</span>
<div class="gcb" style="left:1001.5px;top:623px"></div><svg style="left:1001.5px;top:623px" width="15" height="15" viewBox="0 0 15 15"><path d="M3.8 7 L6.3 9.8 L10.4 4.8" fill="none" stroke="#000" stroke-width="2.1"/></svg>
<span class="t" style="letter-spacing:-0.074px;left:1035px;top:623px;line-height:16px;font-size:12px;color:#000">Ano</span>
<div class="gcb" style="left:1157px;top:623px"></div>
<span class="t" style="left:1294.5px;top:623px;line-height:16px;font-size:12px;color:#000">0</span>
<div style="left:204px;top:640px;width:1288px;height:18px;background:#f5f5f5;border-bottom:1px solid #c9c9c9"></div>
<div class="gcb" style="left:210px;top:641px"></div>
<span class="t" style="letter-spacing:-0.334px;left:232px;top:641px;line-height:16px;font-size:12px;color:#000">030</span>
<span class="t" style="letter-spacing:-0.557px;left:267px;top:641px;line-height:16px;font-size:12px;color:#000">31. VULCANO</span>
<span class="t" style="letter-spacing:-0.582px;left:495.5px;top:641px;line-height:16px;font-size:12px;color:#000">ks</span>
<span class="t" style="letter-spacing:-0.334px;right:1347.83px;top:641px;line-height:16px;font-size:12px;color:#000">169</span>
<span class="t" style="letter-spacing:-0.334px;right:1307.83px;top:641px;line-height:16px;font-size:12px;color:#000">169</span>
<span class="t" style="letter-spacing:-0.447px;right:1267.95px;top:641px;line-height:16px;font-size:12px;color:#000">0.00</span>
<div class="gcb" style="left:681px;top:641px"></div><svg style="left:681px;top:641px" width="15" height="15" viewBox="0 0 15 15"><path d="M3.8 7 L6.3 9.8 L10.4 4.8" fill="none" stroke="#000" stroke-width="2.1"/></svg>
<span class="t" style="letter-spacing:-0.657px;left:725px;top:641px;line-height:16px;font-size:12px;color:#000">PIZZA</span>
<div class="gcb" style="left:806px;top:641px"></div>
<span class="t" style="letter-spacing:-0.447px;right:1037.95px;top:641px;line-height:16px;font-size:12px;color:#000">15.0</span>
<div class="gcb" style="left:1001.5px;top:641px"></div><svg style="left:1001.5px;top:641px" width="15" height="15" viewBox="0 0 15 15"><path d="M3.8 7 L6.3 9.8 L10.4 4.8" fill="none" stroke="#000" stroke-width="2.1"/></svg>
<span class="t" style="letter-spacing:-0.074px;left:1035px;top:641px;line-height:16px;font-size:12px;color:#000">Ano</span>
<div class="gcb" style="left:1157px;top:641px"></div>
<span class="t" style="left:1294.5px;top:641px;line-height:16px;font-size:12px;color:#000">0</span>
<div style="left:204px;top:658px;width:1288px;height:18px;background:#dcdcdc;border-bottom:1px solid #c9c9c9"></div>
<div class="gcb" style="left:210px;top:659px"></div>
<span class="t" style="letter-spacing:-0.334px;left:232px;top:659px;line-height:16px;font-size:12px;color:#000">031</span>
<span class="t" style="letter-spacing:-0.665px;left:267px;top:659px;line-height:16px;font-size:12px;color:#000">32. MEXICKÁ</span>
<span class="t" style="letter-spacing:-0.582px;left:495.5px;top:659px;line-height:16px;font-size:12px;color:#000">ks</span>
<span class="t" style="letter-spacing:-0.334px;right:1347.83px;top:659px;line-height:16px;font-size:12px;color:#000">169</span>
<span class="t" style="letter-spacing:-0.334px;right:1307.83px;top:659px;line-height:16px;font-size:12px;color:#000">169</span>
<span class="t" style="letter-spacing:-0.447px;right:1267.95px;top:659px;line-height:16px;font-size:12px;color:#000">0.00</span>
<div class="gcb" style="left:681px;top:659px"></div><svg style="left:681px;top:659px" width="15" height="15" viewBox="0 0 15 15"><path d="M3.8 7 L6.3 9.8 L10.4 4.8" fill="none" stroke="#000" stroke-width="2.1"/></svg>
<span class="t" style="letter-spacing:-0.657px;left:725px;top:659px;line-height:16px;font-size:12px;color:#000">PIZZA</span>
<div class="gcb" style="left:806px;top:659px"></div>
<span class="t" style="letter-spacing:-0.447px;right:1037.95px;top:659px;line-height:16px;font-size:12px;color:#000">15.0</span>
<div class="gcb" style="left:1001.5px;top:659px"></div><svg style="left:1001.5px;top:659px" width="15" height="15" viewBox="0 0 15 15"><path d="M3.8 7 L6.3 9.8 L10.4 4.8" fill="none" stroke="#000" stroke-width="2.1"/></svg>
<span class="t" style="letter-spacing:-0.074px;left:1035px;top:659px;line-height:16px;font-size:12px;color:#000">Ano</span>
<div class="gcb" style="left:1157px;top:659px"></div>
<span class="t" style="left:1294.5px;top:659px;line-height:16px;font-size:12px;color:#000">0</span>
<div style="left:204px;top:676px;width:1288px;height:18px;background:#f5f5f5;border-bottom:1px solid #c9c9c9"></div>
<div class="gcb" style="left:210px;top:677px"></div>
<span class="t" style="letter-spacing:-0.334px;left:232px;top:677px;line-height:16px;font-size:12px;color:#000">032</span>
<span class="t" style="letter-spacing:-0.803px;left:267px;top:677px;line-height:16px;font-size:12px;color:#000">33. SÝROVÁ KLASIKA</span>
<span class="t" style="letter-spacing:-0.582px;left:495.5px;top:677px;line-height:16px;font-size:12px;color:#000">ks</span>
<span class="t" style="letter-spacing:-0.334px;right:1347.83px;top:677px;line-height:16px;font-size:12px;color:#000">139</span>
<span class="t" style="letter-spacing:-0.334px;right:1307.83px;top:677px;line-height:16px;font-size:12px;color:#000">139</span>
<span class="t" style="letter-spacing:-0.447px;right:1267.95px;top:677px;line-height:16px;font-size:12px;color:#000">0.00</span>
<div class="gcb" style="left:681px;top:677px"></div><svg style="left:681px;top:677px" width="15" height="15" viewBox="0 0 15 15"><path d="M3.8 7 L6.3 9.8 L10.4 4.8" fill="none" stroke="#000" stroke-width="2.1"/></svg>
<span class="t" style="letter-spacing:-0.657px;left:725px;top:677px;line-height:16px;font-size:12px;color:#000">PIZZA</span>
<div class="gcb" style="left:806px;top:677px"></div>
<span class="t" style="letter-spacing:-0.447px;right:1037.95px;top:677px;line-height:16px;font-size:12px;color:#000">15.0</span>
<div class="gcb" style="left:1001.5px;top:677px"></div><svg style="left:1001.5px;top:677px" width="15" height="15" viewBox="0 0 15 15"><path d="M3.8 7 L6.3 9.8 L10.4 4.8" fill="none" stroke="#000" stroke-width="2.1"/></svg>
<span class="t" style="letter-spacing:-0.074px;left:1035px;top:677px;line-height:16px;font-size:12px;color:#000">Ano</span>
<div class="gcb" style="left:1157px;top:677px"></div>
<span class="t" style="left:1294.5px;top:677px;line-height:16px;font-size:12px;color:#000">0</span>
<div style="left:204px;top:694px;width:1288px;height:18px;background:#dcdcdc;border-bottom:1px solid #c9c9c9"></div>
<div class="gcb" style="left:210px;top:695px"></div>
<span class="t" style="letter-spacing:-0.334px;left:232px;top:695px;line-height:16px;font-size:12px;color:#000">033</span>
<span class="t" style="letter-spacing:-0.584px;left:267px;top:695px;line-height:16px;font-size:12px;color:#000">34. QUATRO FORMAGI</span>
<span class="t" style="letter-spacing:-0.582px;left:495.5px;top:695px;line-height:16px;font-size:12px;color:#000">ks</span>
<span class="t" style="letter-spacing:-0.334px;right:1347.83px;top:695px;line-height:16px;font-size:12px;color:#000">159</span>
<span class="t" style="letter-spacing:-0.334px;right:1307.83px;top:695px;line-height:16px;font-size:12px;color:#000">159</span>
<span class="t" style="letter-spacing:-0.447px;right:1267.95px;top:695px;line-height:16px;font-size:12px;color:#000">0.00</span>
<div class="gcb" style="left:681px;top:695px"></div><svg style="left:681px;top:695px" width="15" height="15" viewBox="0 0 15 15"><path d="M3.8 7 L6.3 9.8 L10.4 4.8" fill="none" stroke="#000" stroke-width="2.1"/></svg>
<span class="t" style="letter-spacing:-0.657px;left:725px;top:695px;line-height:16px;font-size:12px;color:#000">PIZZA</span>
<div class="gcb" style="left:806px;top:695px"></div>
<span class="t" style="letter-spacing:-0.447px;right:1037.95px;top:695px;line-height:16px;font-size:12px;color:#000">15.0</span>
<div class="gcb" style="left:1001.5px;top:695px"></div><svg style="left:1001.5px;top:695px" width="15" height="15" viewBox="0 0 15 15"><path d="M3.8 7 L6.3 9.8 L10.4 4.8" fill="none" stroke="#000" stroke-width="2.1"/></svg>
<span class="t" style="letter-spacing:-0.074px;left:1035px;top:695px;line-height:16px;font-size:12px;color:#000">Ano</span>
<div class="gcb" style="left:1157px;top:695px"></div>
<span class="t" style="left:1294.5px;top:695px;line-height:16px;font-size:12px;color:#000">0</span>
<div style="left:204px;top:712px;width:1288px;height:18px;background:#f5f5f5;border-bottom:1px solid #c9c9c9"></div>
<div class="gcb" style="left:210px;top:713px"></div>
<span class="t" style="letter-spacing:-0.334px;left:232px;top:713px;line-height:16px;font-size:12px;color:#000">034</span>
<span class="t" style="letter-spacing:-0.594px;left:267px;top:713px;line-height:16px;font-size:12px;color:#000">35. TVARUŽKOVÁ</span>
<span class="t" style="letter-spacing:-0.582px;left:495.5px;top:713px;line-height:16px;font-size:12px;color:#000">ks</span>
<span class="t" style="letter-spacing:-0.334px;right:1347.83px;top:713px;line-height:16px;font-size:12px;color:#000">169</span>
<span class="t" style="letter-spacing:-0.334px;right:1307.83px;top:713px;line-height:16px;font-size:12px;color:#000">169</span>
<span class="t" style="letter-spacing:-0.447px;right:1267.95px;top:713px;line-height:16px;font-size:12px;color:#000">0.00</span>
<div class="gcb" style="left:681px;top:713px"></div><svg style="left:681px;top:713px" width="15" height="15" viewBox="0 0 15 15"><path d="M3.8 7 L6.3 9.8 L10.4 4.8" fill="none" stroke="#000" stroke-width="2.1"/></svg>
<span class="t" style="letter-spacing:-0.657px;left:725px;top:713px;line-height:16px;font-size:12px;color:#000">PIZZA</span>
<div class="gcb" style="left:806px;top:713px"></div>
<span class="t" style="letter-spacing:-0.447px;right:1037.95px;top:713px;line-height:16px;font-size:12px;color:#000">15.0</span>
<div class="gcb" style="left:1001.5px;top:713px"></div><svg style="left:1001.5px;top:713px" width="15" height="15" viewBox="0 0 15 15"><path d="M3.8 7 L6.3 9.8 L10.4 4.8" fill="none" stroke="#000" stroke-width="2.1"/></svg>
<span class="t" style="letter-spacing:-0.074px;left:1035px;top:713px;line-height:16px;font-size:12px;color:#000">Ano</span>
<div class="gcb" style="left:1157px;top:713px"></div>
<span class="t" style="left:1294.5px;top:713px;line-height:16px;font-size:12px;color:#000">0</span>
<div style="left:204px;top:730px;width:1288px;height:18px;background:#dcdcdc;border-bottom:1px solid #c9c9c9"></div>
<div class="gcb" style="left:210px;top:731px"></div>
<span class="t" style="letter-spacing:-0.334px;left:232px;top:731px;line-height:16px;font-size:12px;color:#000">035</span>
<span class="t" style="letter-spacing:-0.979px;left:267px;top:731px;line-height:16px;font-size:12px;color:#000">36. SÝROVÝ SPECIÁL</span>
<span class="t" style="letter-spacing:-0.582px;left:495.5px;top:731px;line-height:16px;font-size:12px;color:#000">ks</span>
<span class="t" style="letter-spacing:-0.334px;right:1347.83px;top:731px;line-height:16px;font-size:12px;color:#000">159</span>
<span class="t" style="letter-spacing:-0.334px;right:1307.83px;top:731px;line-height:16px;font-size:12px;color:#000">159</span>
<span class="t" style="letter-spacing:-0.447px;right:1267.95px;top:731px;line-height:16px;font-size:12px;color:#000">0.00</span>
<div class="gcb" style="left:681px;top:731px"></div><svg style="left:681px;top:731px" width="15" height="15" viewBox="0 0 15 15"><path d="M3.8 7 L6.3 9.8 L10.4 4.8" fill="none" stroke="#000" stroke-width="2.1"/></svg>
<span class="t" style="letter-spacing:-0.657px;left:725px;top:731px;line-height:16px;font-size:12px;color:#000">PIZZA</span>
<div class="gcb" style="left:806px;top:731px"></div>
<span class="t" style="letter-spacing:-0.447px;right:1037.95px;top:731px;line-height:16px;font-size:12px;color:#000">15.0</span>
<div class="gcb" style="left:1001.5px;top:731px"></div><svg style="left:1001.5px;top:731px" width="15" height="15" viewBox="0 0 15 15"><path d="M3.8 7 L6.3 9.8 L10.4 4.8" fill="none" stroke="#000" stroke-width="2.1"/></svg>
<span class="t" style="letter-spacing:-0.074px;left:1035px;top:731px;line-height:16px;font-size:12px;color:#000">Ano</span>
<div class="gcb" style="left:1157px;top:731px"></div>
<span class="t" style="left:1294.5px;top:731px;line-height:16px;font-size:12px;color:#000">0</span>
<div style="left:204px;top:748px;width:1288px;height:18px;background:#f5f5f5;border-bottom:1px solid #c9c9c9"></div>
<div class="gcb" style="left:210px;top:749px"></div>
<span class="t" style="letter-spacing:-0.334px;left:232px;top:749px;line-height:16px;font-size:12px;color:#000">036</span>
<span class="t" style="letter-spacing:-0.519px;left:267px;top:749px;line-height:16px;font-size:12px;color:#000">37. EINSTAIN</span>
<span class="t" style="letter-spacing:-0.582px;left:495.5px;top:749px;line-height:16px;font-size:12px;color:#000">ks</span>
<span class="t" style="letter-spacing:-0.334px;right:1347.83px;top:749px;line-height:16px;font-size:12px;color:#000">159</span>
<span class="t" style="letter-spacing:-0.334px;right:1307.83px;top:749px;line-height:16px;font-size:12px;color:#000">159</span>
<span class="t" style="letter-spacing:-0.447px;right:1267.95px;top:749px;line-height:16px;font-size:12px;color:#000">0.00</span>
<div class="gcb" style="left:681px;top:749px"></div><svg style="left:681px;top:749px" width="15" height="15" viewBox="0 0 15 15"><path d="M3.8 7 L6.3 9.8 L10.4 4.8" fill="none" stroke="#000" stroke-width="2.1"/></svg>
<span class="t" style="letter-spacing:-0.657px;left:725px;top:749px;line-height:16px;font-size:12px;color:#000">PIZZA</span>
<div class="gcb" style="left:806px;top:749px"></div>
<span class="t" style="letter-spacing:-0.447px;right:1037.95px;top:749px;line-height:16px;font-size:12px;color:#000">15.0</span>
<div class="gcb" style="left:1001.5px;top:749px"></div><svg style="left:1001.5px;top:749px" width="15" height="15" viewBox="0 0 15 15"><path d="M3.8 7 L6.3 9.8 L10.4 4.8" fill="none" stroke="#000" stroke-width="2.1"/></svg>
<span class="t" style="letter-spacing:-0.074px;left:1035px;top:749px;line-height:16px;font-size:12px;color:#000">Ano</span>
<div class="gcb" style="left:1157px;top:749px"></div>
<span class="t" style="left:1294.5px;top:749px;line-height:16px;font-size:12px;color:#000">0</span>
<div style="left:204px;top:766px;width:1288px;height:18px;background:#dcdcdc;border-bottom:1px solid #c9c9c9"></div>
<div class="gcb" style="left:210px;top:767px"></div>
<span class="t" style="letter-spacing:-0.334px;left:232px;top:767px;line-height:16px;font-size:12px;color:#000">037</span>
<span class="t" style="letter-spacing:-0.495px;left:267px;top:767px;line-height:16px;font-size:12px;color:#000">38. AMAROSA</span>
<span class="t" style="letter-spacing:-0.582px;left:495.5px;top:767px;line-height:16px;font-size:12px;color:#000">ks</span>
<span class="t" style="letter-spacing:-0.334px;right:1347.83px;top:767px;line-height:16px;font-size:12px;color:#000">139</span>
<span class="t" style="letter-spacing:-0.334px;right:1307.83px;top:767px;line-height:16px;font-size:12px;color:#000">139</span>
<span class="t" style="letter-spacing:-0.447px;right:1267.95px;top:767px;line-height:16px;font-size:12px;color:#000">0.00</span>
<div class="gcb" style="left:681px;top:767px"></div><svg style="left:681px;top:767px" width="15" height="15" viewBox="0 0 15 15"><path d="M3.8 7 L6.3 9.8 L10.4 4.8" fill="none" stroke="#000" stroke-width="2.1"/></svg>
<span class="t" style="letter-spacing:-0.657px;left:725px;top:767px;line-height:16px;font-size:12px;color:#000">PIZZA</span>
<div class="gcb" style="left:806px;top:767px"></div>
<span class="t" style="letter-spacing:-0.447px;right:1037.95px;top:767px;line-height:16px;font-size:12px;color:#000">15.0</span>
<div class="gcb" style="left:1001.5px;top:767px"></div><svg style="left:1001.5px;top:767px" width="15" height="15" viewBox="0 0 15 15"><path d="M3.8 7 L6.3 9.8 L10.4 4.8" fill="none" stroke="#000" stroke-width="2.1"/></svg>
<span class="t" style="letter-spacing:-0.074px;left:1035px;top:767px;line-height:16px;font-size:12px;color:#000">Ano</span>
<div class="gcb" style="left:1157px;top:767px"></div>
<span class="t" style="left:1294.5px;top:767px;line-height:16px;font-size:12px;color:#000">0</span>
<div style="left:204px;top:784px;width:1288px;height:18px;background:#f5f5f5;border-bottom:1px solid #c9c9c9"></div>
<div class="gcb" style="left:210px;top:785px"></div>
<span class="t" style="letter-spacing:-0.334px;left:232px;top:785px;line-height:16px;font-size:12px;color:#000">038</span>
<span class="t" style="letter-spacing:-0.776px;left:267px;top:785px;line-height:16px;font-size:12px;color:#000">39. BROKOLKA</span>
<span class="t" style="letter-spacing:-0.582px;left:495.5px;top:785px;line-height:16px;font-size:12px;color:#000">ks</span>
<span class="t" style="letter-spacing:-0.334px;right:1347.83px;top:785px;line-height:16px;font-size:12px;color:#000">139</span>
<span class="t" style="letter-spacing:-0.334px;right:1307.83px;top:785px;line-height:16px;font-size:12px;color:#000">139</span>
<span class="t" style="letter-spacing:-0.447px;right:1267.95px;top:785px;line-height:16px;font-size:12px;color:#000">0.00</span>
<div class="gcb" style="left:681px;top:785px"></div><svg style="left:681px;top:785px" width="15" height="15" viewBox="0 0 15 15"><path d="M3.8 7 L6.3 9.8 L10.4 4.8" fill="none" stroke="#000" stroke-width="2.1"/></svg>
<span class="t" style="letter-spacing:-0.657px;left:725px;top:785px;line-height:16px;font-size:12px;color:#000">PIZZA</span>
<div class="gcb" style="left:806px;top:785px"></div>
<span class="t" style="letter-spacing:-0.447px;right:1037.95px;top:785px;line-height:16px;font-size:12px;color:#000">15.0</span>
<div class="gcb" style="left:1001.5px;top:785px"></div><svg style="left:1001.5px;top:785px" width="15" height="15" viewBox="0 0 15 15"><path d="M3.8 7 L6.3 9.8 L10.4 4.8" fill="none" stroke="#000" stroke-width="2.1"/></svg>
<span class="t" style="letter-spacing:-0.074px;left:1035px;top:785px;line-height:16px;font-size:12px;color:#000">Ano</span>
<div class="gcb" style="left:1157px;top:785px"></div>
<span class="t" style="left:1294.5px;top:785px;line-height:16px;font-size:12px;color:#000">0</span>
<div style="left:204px;top:802px;width:1288px;height:18px;background:#dcdcdc;border-bottom:1px solid #c9c9c9"></div>
<div class="gcb" style="left:210px;top:803px"></div>
<span class="t" style="letter-spacing:-0.334px;left:232px;top:803px;line-height:16px;font-size:12px;color:#000">039</span>
<span class="t" style="letter-spacing:-0.683px;left:267px;top:803px;line-height:16px;font-size:12px;color:#000">42. FRUTTI DI MARE</span>
<span class="t" style="letter-spacing:-0.582px;left:495.5px;top:803px;line-height:16px;font-size:12px;color:#000">ks</span>
<span class="t" style="letter-spacing:-0.334px;right:1347.83px;top:803px;line-height:16px;font-size:12px;color:#000">179</span>
<span class="t" style="letter-spacing:-0.334px;right:1307.83px;top:803px;line-height:16px;font-size:12px;color:#000">179</span>
<span class="t" style="letter-spacing:-0.447px;right:1267.95px;top:803px;line-height:16px;font-size:12px;color:#000">0.00</span>
<div class="gcb" style="left:681px;top:803px"></div><svg style="left:681px;top:803px" width="15" height="15" viewBox="0 0 15 15"><path d="M3.8 7 L6.3 9.8 L10.4 4.8" fill="none" stroke="#000" stroke-width="2.1"/></svg>
<span class="t" style="letter-spacing:-0.657px;left:725px;top:803px;line-height:16px;font-size:12px;color:#000">PIZZA</span>
<div class="gcb" style="left:806px;top:803px"></div>
<span class="t" style="letter-spacing:-0.447px;right:1037.95px;top:803px;line-height:16px;font-size:12px;color:#000">15.0</span>
<div class="gcb" style="left:1001.5px;top:803px"></div><svg style="left:1001.5px;top:803px" width="15" height="15" viewBox="0 0 15 15"><path d="M3.8 7 L6.3 9.8 L10.4 4.8" fill="none" stroke="#000" stroke-width="2.1"/></svg>
<span class="t" style="letter-spacing:-0.074px;left:1035px;top:803px;line-height:16px;font-size:12px;color:#000">Ano</span>
<div class="gcb" style="left:1157px;top:803px"></div>
<span class="t" style="left:1294.5px;top:803px;line-height:16px;font-size:12px;color:#000">0</span>
<div style="left:204px;top:820px;width:1288px;height:18px;background:#f5f5f5;border-bottom:1px solid #c9c9c9"></div>
<div class="gcb" style="left:210px;top:821px"></div>
<span class="t" style="letter-spacing:-0.334px;left:232px;top:821px;line-height:16px;font-size:12px;color:#000">040</span>
<span class="t" style="letter-spacing:-0.625px;left:267px;top:821px;line-height:16px;font-size:12px;color:#000">43. RIO MARE</span>
<span class="t" style="letter-spacing:-0.582px;left:495.5px;top:821px;line-height:16px;font-size:12px;color:#000">ks</span>
<span class="t" style="letter-spacing:-0.334px;right:1347.83px;top:821px;line-height:16px;font-size:12px;color:#000">179</span>
<span class="t" style="letter-spacing:-0.334px;right:1307.83px;top:821px;line-height:16px;font-size:12px;color:#000">179</span>
<span class="t" style="letter-spacing:-0.447px;right:1267.95px;top:821px;line-height:16px;font-size:12px;color:#000">0.00</span>
<div class="gcb" style="left:681px;top:821px"></div><svg style="left:681px;top:821px" width="15" height="15" viewBox="0 0 15 15"><path d="M3.8 7 L6.3 9.8 L10.4 4.8" fill="none" stroke="#000" stroke-width="2.1"/></svg>
<span class="t" style="letter-spacing:-0.657px;left:725px;top:821px;line-height:16px;font-size:12px;color:#000">PIZZA</span>
<div class="gcb" style="left:806px;top:821px"></div>
<span class="t" style="letter-spacing:-0.447px;right:1037.95px;top:821px;line-height:16px;font-size:12px;color:#000">15.0</span>
<div class="gcb" style="left:1001.5px;top:821px"></div><svg style="left:1001.5px;top:821px" width="15" height="15" viewBox="0 0 15 15"><path d="M3.8 7 L6.3 9.8 L10.4 4.8" fill="none" stroke="#000" stroke-width="2.1"/></svg>
<span class="t" style="letter-spacing:-0.074px;left:1035px;top:821px;line-height:16px;font-size:12px;color:#000">Ano</span>
<div class="gcb" style="left:1157px;top:821px"></div>
<span class="t" style="left:1294.5px;top:821px;line-height:16px;font-size:12px;color:#000">0</span>
<div style="left:204px;top:838px;width:1288px;height:18px;background:#dcdcdc;border-bottom:1px solid #c9c9c9"></div>
<div class="gcb" style="left:210px;top:839px"></div>
<span class="t" style="letter-spacing:-0.334px;left:232px;top:839px;line-height:16px;font-size:12px;color:#000">041</span>
<span class="t" style="letter-spacing:-0.695px;left:267px;top:839px;line-height:16px;font-size:12px;color:#000">45. KRABÍ</span>
<span class="t" style="letter-spacing:-0.582px;left:495.5px;top:839px;line-height:16px;font-size:12px;color:#000">ks</span>
<span class="t" style="letter-spacing:-0.334px;right:1347.83px;top:839px;line-height:16px;font-size:12px;color:#000">139</span>
<span class="t" style="letter-spacing:-0.334px;right:1307.83px;top:839px;line-height:16px;font-size:12px;color:#000">139</span>
<span class="t" style="letter-spacing:-0.447px;right:1267.95px;top:839px;line-height:16px;font-size:12px;color:#000">0.00</span>
<div class="gcb" style="left:681px;top:839px"></div><svg style="left:681px;top:839px" width="15" height="15" viewBox="0 0 15 15"><path d="M3.8 7 L6.3 9.8 L10.4 4.8" fill="none" stroke="#000" stroke-width="2.1"/></svg>
<span class="t" style="letter-spacing:-0.657px;left:725px;top:839px;line-height:16px;font-size:12px;color:#000">PIZZA</span>
<div class="gcb" style="left:806px;top:839px"></div>
<span class="t" style="letter-spacing:-0.447px;right:1037.95px;top:839px;line-height:16px;font-size:12px;color:#000">15.0</span>
<div class="gcb" style="left:1001.5px;top:839px"></div><svg style="left:1001.5px;top:839px" width="15" height="15" viewBox="0 0 15 15"><path d="M3.8 7 L6.3 9.8 L10.4 4.8" fill="none" stroke="#000" stroke-width="2.1"/></svg>
<span class="t" style="letter-spacing:-0.074px;left:1035px;top:839px;line-height:16px;font-size:12px;color:#000">Ano</span>
<div class="gcb" style="left:1157px;top:839px"></div>
<span class="t" style="left:1294.5px;top:839px;line-height:16px;font-size:12px;color:#000">0</span>
<div style="left:204px;top:856px;width:1288px;height:18px;background:#f5f5f5;border-bottom:1px solid #c9c9c9"></div>
<div class="gcb" style="left:210px;top:857px"></div>
<span class="t" style="letter-spacing:-0.334px;left:232px;top:857px;line-height:16px;font-size:12px;color:#000">042</span>
<span class="t" style="letter-spacing:-0.512px;left:267px;top:857px;line-height:16px;font-size:12px;color:#000">46. TUŇÁKOVÁ</span>
<span class="t" style="letter-spacing:-0.582px;left:495.5px;top:857px;line-height:16px;font-size:12px;color:#000">ks</span>
<span class="t" style="letter-spacing:-0.334px;right:1347.83px;top:857px;line-height:16px;font-size:12px;color:#000">149</span>
<span class="t" style="letter-spacing:-0.334px;right:1307.83px;top:857px;line-height:16px;font-size:12px;color:#000">149</span>
<span class="t" style="letter-spacing:-0.447px;right:1267.95px;top:857px;line-height:16px;font-size:12px;color:#000">0.00</span>
<div class="gcb" style="left:681px;top:857px"></div><svg style="left:681px;top:857px" width="15" height="15" viewBox="0 0 15 15"><path d="M3.8 7 L6.3 9.8 L10.4 4.8" fill="none" stroke="#000" stroke-width="2.1"/></svg>
<span class="t" style="letter-spacing:-0.657px;left:725px;top:857px;line-height:16px;font-size:12px;color:#000">PIZZA</span>
<div class="gcb" style="left:806px;top:857px"></div>
<span class="t" style="letter-spacing:-0.447px;right:1037.95px;top:857px;line-height:16px;font-size:12px;color:#000">15.0</span>
<div class="gcb" style="left:1001.5px;top:857px"></div><svg style="left:1001.5px;top:857px" width="15" height="15" viewBox="0 0 15 15"><path d="M3.8 7 L6.3 9.8 L10.4 4.8" fill="none" stroke="#000" stroke-width="2.1"/></svg>
<span class="t" style="letter-spacing:-0.074px;left:1035px;top:857px;line-height:16px;font-size:12px;color:#000">Ano</span>
<span class="t" style="letter-spacing:-0.424px;right:787.924px;top:857px;line-height:16px;font-size:12px;color:#000">80.00</span>
<div class="gcb" style="left:1157px;top:857px"></div>
<span class="t" style="left:1294.5px;top:857px;line-height:16px;font-size:12px;color:#000">0</span>
<div style="left:204px;top:874px;width:1288px;height:18px;background:#dcdcdc;border-bottom:1px solid #c9c9c9"></div>
<div class="gcb" style="left:210px;top:875px"></div>
<span class="t" style="letter-spacing:-0.334px;left:232px;top:875px;line-height:16px;font-size:12px;color:#000">043</span>
<span class="t" style="letter-spacing:-0.770px;left:267px;top:875px;line-height:16px;font-size:12px;color:#000">48. PROSCIUTTO E FUNGHI</span>
<span class="t" style="letter-spacing:-0.582px;left:495.5px;top:875px;line-height:16px;font-size:12px;color:#000">ks</span>
<span class="t" style="letter-spacing:-0.334px;right:1347.83px;top:875px;line-height:16px;font-size:12px;color:#000">179</span>
<span class="t" style="letter-spacing:-0.334px;right:1307.83px;top:875px;line-height:16px;font-size:12px;color:#000">179</span>
<span class="t" style="letter-spacing:-0.447px;right:1267.95px;top:875px;line-height:16px;font-size:12px;color:#000">0.00</span>
<div class="gcb" style="left:681px;top:875px"></div><svg style="left:681px;top:875px" width="15" height="15" viewBox="0 0 15 15"><path d="M3.8 7 L6.3 9.8 L10.4 4.8" fill="none" stroke="#000" stroke-width="2.1"/></svg>
<span class="t" style="letter-spacing:-0.657px;left:725px;top:875px;line-height:16px;font-size:12px;color:#000">PIZZA</span>
<div class="gcb" style="left:806px;top:875px"></div>
<span class="t" style="letter-spacing:-0.447px;right:1037.95px;top:875px;line-height:16px;font-size:12px;color:#000">15.0</span>
<div class="gcb" style="left:1001.5px;top:875px"></div><svg style="left:1001.5px;top:875px" width="15" height="15" viewBox="0 0 15 15"><path d="M3.8 7 L6.3 9.8 L10.4 4.8" fill="none" stroke="#000" stroke-width="2.1"/></svg>
<span class="t" style="letter-spacing:-0.074px;left:1035px;top:875px;line-height:16px;font-size:12px;color:#000">Ano</span>
<span class="t" style="letter-spacing:-0.424px;right:787.924px;top:875px;line-height:16px;font-size:12px;color:#000">70.41</span>
<div class="gcb" style="left:1157px;top:875px"></div>
<span class="t" style="left:1294.5px;top:875px;line-height:16px;font-size:12px;color:#000">0</span>
<div style="left:204px;top:892px;width:1288px;height:18px;background:#f5f5f5;border-bottom:1px solid #c9c9c9"></div>
<div class="gcb" style="left:210px;top:893px"></div>
<span class="t" style="letter-spacing:-0.334px;left:232px;top:893px;line-height:16px;font-size:12px;color:#000">044</span>
<span class="t" style="letter-spacing:-0.819px;left:267px;top:893px;line-height:16px;font-size:12px;color:#000">49. SALSICCI</span>
<span class="t" style="letter-spacing:-0.582px;left:495.5px;top:893px;line-height:16px;font-size:12px;color:#000">ks</span>
<span class="t" style="letter-spacing:-0.334px;right:1347.83px;top:893px;line-height:16px;font-size:12px;color:#000">139</span>
<span class="t" style="letter-spacing:-0.334px;right:1307.83px;top:893px;line-height:16px;font-size:12px;color:#000">139</span>
<span class="t" style="letter-spacing:-0.447px;right:1267.95px;top:893px;line-height:16px;font-size:12px;color:#000">0.00</span>
<div class="gcb" style="left:681px;top:893px"></div><svg style="left:681px;top:893px" width="15" height="15" viewBox="0 0 15 15"><path d="M3.8 7 L6.3 9.8 L10.4 4.8" fill="none" stroke="#000" stroke-width="2.1"/></svg>
<span class="t" style="letter-spacing:-0.657px;left:725px;top:893px;line-height:16px;font-size:12px;color:#000">PIZZA</span>
<div class="gcb" style="left:806px;top:893px"></div>
<span class="t" style="letter-spacing:-0.447px;right:1037.95px;top:893px;line-height:16px;font-size:12px;color:#000">15.0</span>
<div class="gcb" style="left:1001.5px;top:893px"></div><svg style="left:1001.5px;top:893px" width="15" height="15" viewBox="0 0 15 15"><path d="M3.8 7 L6.3 9.8 L10.4 4.8" fill="none" stroke="#000" stroke-width="2.1"/></svg>
<span class="t" style="letter-spacing:-0.074px;left:1035px;top:893px;line-height:16px;font-size:12px;color:#000">Ano</span>
<span class="t" style="letter-spacing:-0.424px;right:787.924px;top:893px;line-height:16px;font-size:12px;color:#000">82.69</span>
<div class="gcb" style="left:1157px;top:893px"></div>
<span class="t" style="left:1294.5px;top:893px;line-height:16px;font-size:12px;color:#000">0</span>
<div style="left:204px;top:910px;width:1288px;height:18px;background:#dcdcdc;border-bottom:1px solid #c9c9c9"></div>
<div class="gcb" style="left:210px;top:911px"></div>
<span class="t" style="letter-spacing:-0.334px;left:232px;top:911px;line-height:16px;font-size:12px;color:#000">045</span>
<span class="t" style="letter-spacing:-0.829px;left:267px;top:911px;line-height:16px;font-size:12px;color:#000">50. PROSCIUTTO</span>
<span class="t" style="letter-spacing:-0.582px;left:495.5px;top:911px;line-height:16px;font-size:12px;color:#000">ks</span>
<span class="t" style="letter-spacing:-0.334px;right:1347.83px;top:911px;line-height:16px;font-size:12px;color:#000">159</span>
<span class="t" style="letter-spacing:-0.334px;right:1307.83px;top:911px;line-height:16px;font-size:12px;color:#000">159</span>
<span class="t" style="letter-spacing:-0.447px;right:1267.95px;top:911px;line-height:16px;font-size:12px;color:#000">0.00</span>
<div class="gcb" style="left:681px;top:911px"></div><svg style="left:681px;top:911px" width="15" height="15" viewBox="0 0 15 15"><path d="M3.8 7 L6.3 9.8 L10.4 4.8" fill="none" stroke="#000" stroke-width="2.1"/></svg>
<span class="t" style="letter-spacing:-0.657px;left:725px;top:911px;line-height:16px;font-size:12px;color:#000">PIZZA</span>
<div class="gcb" style="left:806px;top:911px"></div>
<span class="t" style="letter-spacing:-0.447px;right:1037.95px;top:911px;line-height:16px;font-size:12px;color:#000">15.0</span>
<div class="gcb" style="left:1001.5px;top:911px"></div><svg style="left:1001.5px;top:911px" width="15" height="15" viewBox="0 0 15 15"><path d="M3.8 7 L6.3 9.8 L10.4 4.8" fill="none" stroke="#000" stroke-width="2.1"/></svg>
<span class="t" style="letter-spacing:-0.074px;left:1035px;top:911px;line-height:16px;font-size:12px;color:#000">Ano</span>
<span class="t" style="letter-spacing:-0.424px;right:787.924px;top:911px;line-height:16px;font-size:12px;color:#000">69.97</span>
<div class="gcb" style="left:1157px;top:911px"></div>
<span class="t" style="left:1294.5px;top:911px;line-height:16px;font-size:12px;color:#000">0</span>
<div style="left:204px;top:928px;width:1288px;height:18px;background:#f5f5f5;border-bottom:1px solid #c9c9c9"></div>
<div class="gcb" style="left:210px;top:929px"></div>
<span class="t" style="letter-spacing:-0.334px;left:232px;top:929px;line-height:16px;font-size:12px;color:#000">046</span>
<span class="t" style="letter-spacing:-0.633px;left:267px;top:929px;line-height:16px;font-size:12px;color:#000">51. SALAMINO PICCANTE</span>
<span class="t" style="letter-spacing:-0.582px;left:495.5px;top:929px;line-height:16px;font-size:12px;color:#000">ks</span>
<span class="t" style="letter-spacing:-0.334px;right:1347.83px;top:929px;line-height:16px;font-size:12px;color:#000">139</span>
<span class="t" style="letter-spacing:-0.334px;right:1307.83px;top:929px;line-height:16px;font-size:12px;color:#000">139</span>
<span class="t" style="letter-spacing:-0.447px;right:1267.95px;top:929px;line-height:16px;font-size:12px;color:#000">0.00</span>
<div class="gcb" style="left:681px;top:929px"></div><svg style="left:681px;top:929px" width="15" height="15" viewBox="0 0 15 15"><path d="M3.8 7 L6.3 9.8 L10.4 4.8" fill="none" stroke="#000" stroke-width="2.1"/></svg>
<span class="t" style="letter-spacing:-0.657px;left:725px;top:929px;line-height:16px;font-size:12px;color:#000">PIZZA</span>
<div class="gcb" style="left:806px;top:929px"></div>
<span class="t" style="letter-spacing:-0.447px;right:1037.95px;top:929px;line-height:16px;font-size:12px;color:#000">15.0</span>
<div class="gcb" style="left:1001.5px;top:929px"></div><svg style="left:1001.5px;top:929px" width="15" height="15" viewBox="0 0 15 15"><path d="M3.8 7 L6.3 9.8 L10.4 4.8" fill="none" stroke="#000" stroke-width="2.1"/></svg>
<span class="t" style="letter-spacing:-0.074px;left:1035px;top:929px;line-height:16px;font-size:12px;color:#000">Ano</span>
<span class="t" style="letter-spacing:-0.424px;right:787.924px;top:929px;line-height:16px;font-size:12px;color:#000">83.59</span>
<div class="gcb" style="left:1157px;top:929px"></div>
<span class="t" style="left:1294.5px;top:929px;line-height:16px;font-size:12px;color:#000">0</span>
<div style="left:228px;top:154px;width:1px;height:792px;background:#b4b4b4;opacity:.75"></div>
<div style="left:263px;top:154px;width:1px;height:792px;background:#b4b4b4;opacity:.75"></div>
<div style="left:491px;top:154px;width:1px;height:792px;background:#b4b4b4;opacity:.75"></div>
<div style="left:531px;top:154px;width:1px;height:792px;background:#b4b4b4;opacity:.75"></div>
<div style="left:571px;top:154px;width:1px;height:792px;background:#b4b4b4;opacity:.75"></div>
<div style="left:611px;top:154px;width:1px;height:792px;background:#b4b4b4;opacity:.75"></div>
<div style="left:651px;top:154px;width:1px;height:792px;background:#b4b4b4;opacity:.75"></div>
<div style="left:721px;top:154px;width:1px;height:792px;background:#b4b4b4;opacity:.75"></div>
<div style="left:791px;top:154px;width:1px;height:792px;background:#b4b4b4;opacity:.75"></div>
<div style="left:831px;top:154px;width:1px;height:792px;background:#b4b4b4;opacity:.75"></div>
<div style="left:881px;top:154px;width:1px;height:792px;background:#b4b4b4;opacity:.75"></div>
<div style="left:981px;top:154px;width:1px;height:792px;background:#b4b4b4;opacity:.75"></div>
<div style="left:1031px;top:154px;width:1px;height:792px;background:#b4b4b4;opacity:.75"></div>
<div style="left:1081px;top:154px;width:1px;height:792px;background:#b4b4b4;opacity:.75"></div>
<div style="left:1131px;top:154px;width:1px;height:792px;background:#b4b4b4;opacity:.75"></div>
<div style="left:1191px;top:154px;width:1px;height:792px;background:#b4b4b4;opacity:.75"></div>
<div style="left:1291px;top:154px;width:1px;height:792px;background:#b4b4b4;opacity:.75"></div>
<div style="left:1391px;top:154px;width:1px;height:792px;background:#b4b4b4;opacity:.75"></div>
<div style="left:1491px;top:154px;width:1px;height:792px;background:#b4b4b4;opacity:.75"></div>
<div style="left:201px;top:968px;width:1715px;height:1px;background:#646464"></div>
<div style="left:201px;top:969px;width:1715px;height:1px;background:#fcfcfc"></div>
<div style="left:0px;top:970px;width:1916px;height:30px;background:#f0f0f0"></div>
<div style="left:0px;top:1000px;width:1916px;height:1px;background:#dedede"></div>
<div style="left:0px;top:128px;width:1px;height:872px;background:#5e5e5e"></div>
<div style="left:1px;top:129px;width:1px;height:871px;background:#fff"></div>
<div style="left:0px;top:1001px;width:1916px;height:19px;background:#f0f0f0"></div>
<div style="left:0px;top:1001px;width:1916px;height:1px;background:#fafafa"></div>
<div style="left:0px;top:1020px;width:1916px;height:16px;background:#fff"></div>
<div class="cb" style="left:201.3px;top:977px"></div>
<span class="t" style="letter-spacing:-0.129px;left:217.5px;top:976.5px;line-height:15px;font-size:11px">Řadit dle abecedy</span>
<span class="t" style="letter-spacing:-0.304px;left:1px;top:1004px;line-height:16px;font-size:12px">Směna zahájena 07.10.2019 15:50 uživatelem sef, nyní je přihlášen awis</span>
<span class="t" style="letter-spacing:-0.587px;left:1613px;top:1004px;line-height:16px;font-size:12px">Verze: 5.0.0.724</span>
<span class="t" style="letter-spacing:0.224px;left:1852px;top:1004px;line-height:16px;font-size:12px">NUM</span>
<div style="left:1816px;top:1003px;width:1px;height:16px;background:#d7d7d7"></div>
<div style="left:1847px;top:1003px;width:1px;height:16px;background:#d7d7d7"></div>
<div style="left:1883px;top:1003px;width:1px;height:16px;background:#d7d7d7"></div>
<div style="left:864px;top:974px;width:34.5px;height:20px;background:linear-gradient(180deg,#fdfdfd 0%,#e9e9e9 55%,#bdbdbd 100%);box-shadow:inset -2px 0 2px rgba(120,120,120,.35)"></div>
<div style="left:899px;top:974px;width:34.5px;height:20px;background:linear-gradient(180deg,#fdfdfd 0%,#e9e9e9 55%,#bdbdbd 100%);box-shadow:inset -2px 0 2px rgba(120,120,120,.35)"></div>
<div style="left:984.5px;top:974px;width:34px;height:20px;background:linear-gradient(180deg,#fdfdfd 0%,#e9e9e9 55%,#bdbdbd 100%);box-shadow:inset -2px 0 2px rgba(120,120,120,.35)"></div>
<div style="left:1019px;top:974px;width:35px;height:20px;background:linear-gradient(180deg,#fdfdfd 0%,#e9e9e9 55%,#bdbdbd 100%);box-shadow:inset -2px 0 2px rgba(120,120,120,.35)"></div>
<div class="inp" style="left:934px;top:974px;width:50px;height:20px;"></div>
<span class="t" style="left:959px;transform:translateX(-50%);top:976.5px;line-height:15px;font-size:11px">1 / 7</span>
<svg style="left:864px;top:974px" width="190" height="20" viewBox="864 974 190 20"><rect x="873" y="978" width="3.2" height="12" fill="#a0a0a0"/><path d="M889 977.5 L889 990.5 L877 984 Z" fill="#a0a0a0"/><path d="M909 984 L916 977.6 L916 981.8 L923 981.8 L923 986.2 L916 986.2 L916 990.4 Z" fill="#a0a0a0"/><path d="M1008 984 L1001 977.6 L1001 981.8 L994 981.8 L994 986.2 L1001 986.2 L1001 990.4 Z" fill="#000"/><path d="M1028 977.5 L1028 990.5 L1040 984 Z" fill="#000"/><rect x="1040.5" y="978" width="3.4" height="12" fill="#000"/></svg>
<div style="left:621px;top:170px;width:677px;height:698px;background:#f0f0f0;border:1px solid #707070;box-shadow:0 4px 15px 0 rgba(0,0,0,.4)"></div>
<div style="left:622px;top:171px;width:675px;height:25.5px;background:#fff"></div>
<span class="t" style="letter-spacing:-0.063px;left:625.5px;top:175px;line-height:16px;font-size:12px">Upravit položku ceníku</span>
<svg style="left:1276px;top:177px" width="12" height="12" viewBox="0 0 12 12"><path d="M1 1l10 10M11 1L1 11" stroke="#111" stroke-width="1.1"/></svg>
<div class="grp" style="left:630.5px;top:214px;width:482.5px;height:310px;"></div>
<div style="left:631.5px;top:215px;width:480.5px;height:1px;background:#fff"></div>
<div style="left:636px;top:206px;width:95px;height:16px;background:#f0f0f0"></div>
<span class="t" style="letter-spacing:-0.592px;left:639px;top:206.5px;line-height:15px;font-size:11px;font-weight:bold;font-family:'DejaVu Sans',sans-serif">Údaje pro ceník</span>
<span class="t" style="letter-spacing:-0.143px;left:636.5px;top:228.5px;line-height:15px;font-size:11px">Název:</span>
<div class="cmbw" style="left:726px;top:227px;width:347px;height:21px;border-color:#0078d7;"></div><svg style="left:1058px;top:235px" width="9" height="6" viewBox="0 0 9 6"><path d="M0.6 0.6 L4.5 5 L8.4 0.6" fill="none" stroke="#444" stroke-width="1.2"/></svg>
<div style="left:728px;top:229.5px;width:71px;height:16px;background:#0078d7"></div>
<span class="t" style="letter-spacing:-0.164px;left:729.5px;top:229.5px;line-height:15px;font-size:11px;color:#fff">21. ŠUNKOVÁ</span>
<div style="left:798.5px;top:230px;width:1px;height:15px;background:#000"></div>
<div style="left:1084px;top:226px;width:21px;height:21px;background:#cccccc;border:1px solid #bfbfbf"></div>
<span class="t" style="left:1094.5px;transform:translateX(-50%);top:230.5px;line-height:15px;font-size:11px;color:#9a9a9a">...</span>
<span class="t" style="letter-spacing:-0.141px;left:636.5px;top:258.5px;line-height:15px;font-size:11px">Kód:</span>
<div class="cmbw" style="left:726px;top:253px;width:90px;height:21px;"></div><svg style="left:801px;top:261px" width="9" height="6" viewBox="0 0 9 6"><path d="M0.6 0.6 L4.5 5 L8.4 0.6" fill="none" stroke="#444" stroke-width="1.2"/></svg><span class="t" style="letter-spacing:-0.153px;left:730px;top:256px;line-height:15px;font-size:11px">020</span>
<span class="t" style="letter-spacing:-0.135px;right:966.135px;top:257.5px;line-height:15px;font-size:11px">Čarový kód (EAN):</span>
<div class="inp" style="left:954px;top:253px;width:119px;height:22px;"></div>
<div class="btn" style="left:1084px;top:254.5px;width:21px;height:20.5px;"></div><span class="t" style="letter-spacing:-0.076px;left:1094.46px;transform:translateX(-50%);top:257.25px;line-height:15px;font-size:11px">...</span>
<span class="t" style="letter-spacing:-0.141px;left:636.5px;top:283.5px;line-height:15px;font-size:11px">Cena Kč:</span>
<div class="inp" style="left:726px;top:281px;width:62px;height:20px;"></div><span class="t" style="left:730px;top:283.5px;line-height:15px;font-size:11px">129</span>
<span class="t" style="letter-spacing:-0.130px;left:793.5px;top:283.5px;line-height:15px;font-size:11px">Cena pro personál:</span>
<div class="inp" style="left:888px;top:281px;width:65px;height:20px;"></div><span class="t" style="left:892px;top:283.5px;line-height:15px;font-size:11px">129</span>
<span class="t" style="letter-spacing:-0.138px;left:990px;top:283.5px;line-height:15px;font-size:11px">Cena €:</span>
<div class="inp" style="left:1044px;top:281px;width:61px;height:20px;"></div><span class="t" style="left:1048px;top:283.5px;line-height:15px;font-size:11px">0</span>
<span class="t" style="letter-spacing:-0.133px;left:636.5px;top:309px;line-height:15px;font-size:11px">Druh ceny:</span>
<div class="cmb" style="left:726px;top:305.5px;width:215px;height:20.5px;"></div><svg style="left:926px;top:313.25px" width="9" height="6" viewBox="0 0 9 6"><path d="M0.6 0.6 L4.5 5 L8.4 0.6" fill="none" stroke="#444" stroke-width="1.2"/></svg><span class="t" style="letter-spacing:-0.122px;left:730px;top:308.25px;line-height:15px;font-size:11px">Za kus (restaurace, drobný prodej atd.)</span>
<span class="t" style="letter-spacing:-0.128px;left:636.5px;top:336px;line-height:15px;font-size:11px">Vybrat skupiny</span>
<span class="t" style="letter-spacing:-0.124px;left:636.5px;top:349px;line-height:15px;font-size:11px">účtování v kase:</span>
<div class="cmb" style="left:726px;top:336.5px;width:125.5px;height:20.5px;"></div><svg style="left:836.5px;top:344.25px" width="9" height="6" viewBox="0 0 9 6"><path d="M0.6 0.6 L4.5 5 L8.4 0.6" fill="none" stroke="#444" stroke-width="1.2"/></svg><span class="t" style="letter-spacing:-0.156px;left:730px;top:339.25px;line-height:15px;font-size:11px">PIZZA</span>
<div class="btn" style="left:856px;top:337px;width:84px;height:19.5px;"></div><span class="t" style="letter-spacing:-0.125px;left:897.937px;transform:translateX(-50%);top:339.25px;line-height:15px;font-size:11px">Upravit skupiny</span>
<span class="t" style="letter-spacing:-0.122px;left:636.5px;top:372px;line-height:15px;font-size:11px">Skupina pro tisk</span>
<span class="t" style="letter-spacing:-0.131px;left:636.5px;top:385px;line-height:15px;font-size:11px">uzávěrky:</span>
<div class="cmb" style="left:726px;top:373.5px;width:125.5px;height:20.5px;"></div><svg style="left:836.5px;top:381.25px" width="9" height="6" viewBox="0 0 9 6"><path d="M0.6 0.6 L4.5 5 L8.4 0.6" fill="none" stroke="#444" stroke-width="1.2"/></svg><span class="t" style="letter-spacing:-0.092px;left:730px;top:376.25px;line-height:15px;font-size:11px">-------</span>
<div class="btn" style="left:856px;top:374.5px;width:84px;height:18px;"></div><span class="t" style="letter-spacing:-0.125px;left:897.937px;transform:translateX(-50%);top:376px;line-height:15px;font-size:11px">Upravit skupiny</span>
<span class="t" style="letter-spacing:-0.124px;left:952px;top:366px;line-height:15px;font-size:11px">Provize:</span>
<div class="inp" style="left:952px;top:380px;width:58.5px;height:20.6px;"></div><span class="t" style="left:956px;top:382.8px;line-height:15px;font-size:11px">0</span>
<span class="t" style="letter-spacing:-0.160px;left:1012px;top:383px;line-height:15px;font-size:11px">Kč</span>
<div style="left:1038.5px;top:378.5px;width:50px;height:22px;background:#fff;border:1px solid #abadb3"></div><span class="t" style="left:1042.5px;top:380.5px;line-height:15px;font-size:11px">0</span><div style="left:1071.5px;top:380.5px;width:15px;height:9px;background:#f0f0f0;border:1px solid #c0c0c0"></div><div style="left:1071.5px;top:390px;width:15px;height:9px;background:#f0f0f0;border:1px solid #c0c0c0"></div><svg style="left:1075.5px;top:383px" width="7" height="4" viewBox="0 0 7 4"><path d="M0 4L3.5 0L7 4Z" fill="#222"/></svg><svg style="left:1075.5px;top:392.5px" width="7" height="4" viewBox="0 0 7 4"><path d="M0 0L3.5 4L7 0Z" fill="#222"/></svg>
<span class="t" style="left:1092.5px;top:382px;line-height:15px;font-size:11px">%</span>
<div class="inp" style="left:952px;top:404px;width:58.5px;height:20.6px;"></div><span class="t" style="left:956px;top:406.8px;line-height:15px;font-size:11px">0</span>
<span class="t" style="letter-spacing:-0.160px;left:1012px;top:406.5px;line-height:15px;font-size:11px">Kč</span>
<div style="left:1039.5px;top:402px;width:50px;height:22px;background:#fff;border:1px solid #abadb3"></div><span class="t" style="left:1043.5px;top:404px;line-height:15px;font-size:11px">0</span><div style="left:1072.5px;top:404px;width:15px;height:9px;background:#f0f0f0;border:1px solid #c0c0c0"></div><div style="left:1072.5px;top:413.5px;width:15px;height:9px;background:#f0f0f0;border:1px solid #c0c0c0"></div><svg style="left:1076.5px;top:406.5px" width="7" height="4" viewBox="0 0 7 4"><path d="M0 4L3.5 0L7 4Z" fill="#222"/></svg><svg style="left:1076.5px;top:416px" width="7" height="4" viewBox="0 0 7 4"><path d="M0 0L3.5 4L7 0Z" fill="#222"/></svg>
<span class="t" style="left:1093.5px;top:405.5px;line-height:15px;font-size:11px">%</span>
<span class="t" style="letter-spacing:-0.130px;left:636.5px;top:437px;line-height:15px;font-size:11px">DPH při prodeje</span>
<div class="cmb" style="left:724px;top:433px;width:71.5px;height:20.5px;"></div><svg style="left:780.5px;top:440.75px" width="9" height="6" viewBox="0 0 9 6"><path d="M0.6 0.6 L4.5 5 L8.4 0.6" fill="none" stroke="#444" stroke-width="1.2"/></svg><span class="t" style="letter-spacing:-0.134px;left:728px;top:435.75px;line-height:15px;font-size:11px">15.0</span>
<span class="t" style="left:801.5px;top:434.5px;line-height:15px;font-size:11px">%</span>
<div class="cb" style="left:820px;top:438px"></div><span class="t" style="letter-spacing:-0.160px;left:836.5px;top:437px;line-height:15px;font-size:11px">Pevné DPH</span>
<div class="btn" style="left:937px;top:434.5px;width:25px;height:20px;"></div><span class="t" style="left:949.5px;transform:translateX(-50%);top:437px;line-height:15px;font-size:11px">-</span>
<span class="t" style="letter-spacing:-0.144px;left:966px;top:437px;line-height:15px;font-size:11px">Akce, %</span>
<div class="inp" style="left:1041px;top:433.5px;width:64px;height:20px;"></div><span class="t" style="left:1045px;top:436px;line-height:15px;font-size:11px">0</span>
<span class="t" style="letter-spacing:-0.129px;left:636.5px;top:465.5px;line-height:15px;font-size:11px">Spotřební daň:</span>
<div class="inp" style="left:723px;top:463px;width:61.5px;height:20px;"></div><span class="t" style="left:727px;top:465.5px;line-height:15px;font-size:11px">0</span>
<div class="cb" style="left:787px;top:468.5px"></div><span class="t" style="letter-spacing:-0.136px;left:803.5px;top:467.5px;line-height:15px;font-size:11px">Nezapočítavat bonus</span>
<div class="cb" style="left:915px;top:468px"></div><span class="t" style="letter-spacing:-0.133px;left:931.5px;top:467px;line-height:15px;font-size:11px">Dotazovat se na "poznámku" v kase</span>
<div class="cb" style="left:640px;top:498px"></div><span class="t" style="letter-spacing:-0.132px;left:656.5px;top:497px;line-height:15px;font-size:11px">Nejprodávanější</span>
<div class="cb" style="left:748px;top:498px"></div><svg style="left:748px;top:498px" width="13" height="13" viewBox="0 0 13 13"><path d="M2.8 6.6 L5.3 9.2 L10.3 3.4" fill="none" stroke="#222" stroke-width="1.3"/></svg><span class="t" style="letter-spacing:-0.134px;left:764.5px;top:497px;line-height:15px;font-size:11px">Sleva je možná</span>
<div class="cb" style="left:855px;top:498px"></div><span class="t" style="letter-spacing:-0.124px;left:870.5px;top:497px;line-height:15px;font-size:11px">Zadání ceny při placení</span>
<div class="cb" style="left:1018px;top:498px"></div><span class="t" style="letter-spacing:-0.116px;left:1034.5px;top:497px;line-height:15px;font-size:11px">Nabití kreditu</span>
<div class="grp" style="left:630.5px;top:539px;width:482.5px;height:259.5px;"></div>
<div style="left:631.5px;top:540px;width:480.5px;height:1px;background:#fff"></div>
<div style="left:636px;top:531px;width:95px;height:16px;background:#f0f0f0"></div>
<span class="t" style="letter-spacing:-0.660px;left:639px;top:531.5px;line-height:15px;font-size:11px;font-weight:bold;font-family:'DejaVu Sans',sans-serif">Údaje pro sklad</span>
<span class="t" style="letter-spacing:-0.131px;left:648.5px;top:554px;line-height:15px;font-size:11px">Normování položek pro automatické odečítání ze skladu</span>
<span class="t" style="letter-spacing:-0.127px;left:931.5px;top:546.5px;line-height:15px;font-size:11px">Přepočet jednotek:</span>
<div class="cmb" style="left:1026px;top:544.5px;width:78px;height:20.5px;"></div><svg style="left:1089px;top:552.25px" width="9" height="6" viewBox="0 0 9 6"><path d="M0.6 0.6 L4.5 5 L8.4 0.6" fill="none" stroke="#444" stroke-width="1.2"/></svg><span class="t" style="letter-spacing:-0.124px;left:1030px;top:547.25px;line-height:15px;font-size:11px">dle skladu</span>
<div class="rb" style="left:642px;top:574px"></div><div style="left:645px;top:577px;width:7px;height:7px;border-radius:50%;background:#222"></div><span class="t" style="letter-spacing:-0.140px;left:658.5px;top:573px;line-height:15px;font-size:11px">Položka</span>
<div class="rb" style="left:702px;top:574px"></div><span class="t" style="letter-spacing:-0.153px;left:718.5px;top:573px;line-height:15px;font-size:11px">Směsi</span>
<div class="rb" style="left:753px;top:574px"></div><span class="t" style="letter-spacing:-0.131px;left:769.5px;top:573px;line-height:15px;font-size:11px">Kopírovat</span>
<div class="rb" style="left:823px;top:574px"></div><span class="t" style="letter-spacing:-0.172px;left:839.5px;top:573px;line-height:15px;font-size:11px">Menu</span>
<span class="t" style="left:870.5px;top:573px;line-height:15px;font-size:11px;color:#0000cc;text-decoration:underline">?</span>
<span class="t" style="letter-spacing:-0.138px;left:888px;top:572.5px;line-height:15px;font-size:11px">Množství</span>
<div class="cb" style="left:954px;top:574px"></div><span class="t" style="letter-spacing:-0.130px;left:970.5px;top:573px;line-height:15px;font-size:11px">Čistá váha</span>
<div class="cmbw" style="left:645px;top:591px;width:223.5px;height:20.5px;"></div><svg style="left:853.5px;top:598.75px" width="9" height="6" viewBox="0 0 9 6"><path d="M0.6 0.6 L4.5 5 L8.4 0.6" fill="none" stroke="#444" stroke-width="1.2"/></svg><span class="t" style="letter-spacing:-0.113px;left:649px;top:593.75px;line-height:15px;font-size:11px">alobal [ks]</span>
<span class="t" style="left:871.5px;top:594px;line-height:15px;font-size:11px">x</span>
<div class="inp" style="left:883px;top:591px;width:50px;height:20.5px;"></div>
<span class="t" style="left:939px;top:594px;line-height:15px;font-size:11px">x</span>
<div class="inp" style="left:954px;top:591px;width:49.5px;height:20.5px;background:#f0f0f0;border-color:#d0d0d0"></div><span class="t" style="left:958px;top:593.75px;line-height:15px;font-size:11px;color:#9a9a9a">1</span>
<div class="btn" style="left:1009px;top:590px;width:45.5px;height:23.5px;"></div><span class="t" style="letter-spacing:-0.120px;left:1031.69px;transform:translateX(-50%);top:594.25px;line-height:15px;font-size:11px">Přidat</span>
<div class="btn" style="left:1060px;top:590px;width:45px;height:23.5px;"></div><span class="t" style="letter-spacing:-0.142px;left:1082.43px;transform:translateX(-50%);top:594.25px;line-height:15px;font-size:11px">Odebrat</span>
<div style="left:637px;top:620.5px;width:465px;height:127px;background:#fff;border:1px solid #828790"></div>
<span class="t" style="letter-spacing:-0.140px;left:645.5px;top:626.5px;line-height:15px;font-size:11px">Položka</span>
<span class="t" style="letter-spacing:-0.138px;right:1100.14px;top:626.5px;line-height:15px;font-size:11px">Množství</span>
<span class="t" style="letter-spacing:-0.130px;right:1036.63px;top:626.5px;line-height:15px;font-size:11px">Čistá váha</span>
<span class="t" style="letter-spacing:-0.144px;right:940.144px;top:626.5px;line-height:15px;font-size:11px">Nákup (bez DPH)</span>
<span class="t" style="letter-spacing:-0.142px;right:854.642px;top:626.5px;line-height:15px;font-size:11px">Nákup (s DPH)</span>
<div style="left:766px;top:622px;width:1px;height:23px;background:#e5e5e5"></div>
<div style="left:821.5px;top:622px;width:1px;height:23px;background:#e5e5e5"></div>
<div style="left:885px;top:622px;width:1px;height:23px;background:#e5e5e5"></div>
<div style="left:980.5px;top:622px;width:1px;height:23px;background:#e5e5e5"></div>
<div style="left:1065.5px;top:622px;width:1px;height:23px;background:#e5e5e5"></div>
<span class="t" style="letter-spacing:-0.127px;left:645.5px;top:647.5px;line-height:15px;font-size:11px">eidam [kg]</span>
<span class="t" style="letter-spacing:-0.140px;right:1099.64px;top:647.5px;line-height:15px;font-size:11px">0.1200</span>
<span class="t" style="letter-spacing:-0.140px;right:1036.64px;top:647.5px;line-height:15px;font-size:11px">1.0000</span>
<span class="t" style="letter-spacing:-0.140px;right:941.14px;top:647.5px;line-height:15px;font-size:11px">7.7421</span>
<span class="t" style="letter-spacing:-0.140px;right:855.64px;top:647.5px;line-height:15px;font-size:11px">8.9034</span>
<svg style="left:1075px;top:650.5px" width="8" height="9" viewBox="0 0 8 9"><path d="M.5 .5l7 8M7.5 .5l-7 8" stroke="#111" stroke-width="1"/></svg>
<span class="t" style="letter-spacing:-0.115px;left:645.5px;top:664.5px;line-height:15px;font-size:11px">droždí [ks]</span>
<span class="t" style="letter-spacing:-0.140px;right:1099.64px;top:664.5px;line-height:15px;font-size:11px">0.0500</span>
<span class="t" style="letter-spacing:-0.140px;right:1036.64px;top:664.5px;line-height:15px;font-size:11px">1.0000</span>
<span class="t" style="letter-spacing:-0.140px;right:941.14px;top:664.5px;line-height:15px;font-size:11px">0.1867</span>
<span class="t" style="letter-spacing:-0.140px;right:855.64px;top:664.5px;line-height:15px;font-size:11px">0.2147</span>
<svg style="left:1075px;top:667.5px" width="8" height="9" viewBox="0 0 8 9"><path d="M.5 .5l7 8M7.5 .5l-7 8" stroke="#111" stroke-width="1"/></svg>
<span class="t" style="letter-spacing:-0.135px;left:645.5px;top:681.5px;line-height:15px;font-size:11px">pomodoro [kg]</span>
<span class="t" style="letter-spacing:-0.140px;right:1099.64px;top:681.5px;line-height:15px;font-size:11px">0.0600</span>
<span class="t" style="letter-spacing:-0.140px;right:1036.64px;top:681.5px;line-height:15px;font-size:11px">0.0000</span>
<span class="t" style="letter-spacing:-0.137px;right:941.137px;top:681.5px;line-height:15px;font-size:11px">1.1156</span>
<span class="t" style="letter-spacing:-0.140px;right:855.64px;top:681.5px;line-height:15px;font-size:11px">1.2830</span>
<svg style="left:1075px;top:684.5px" width="8" height="9" viewBox="0 0 8 9"><path d="M.5 .5l7 8M7.5 .5l-7 8" stroke="#111" stroke-width="1"/></svg>
<span class="t" style="letter-spacing:-0.109px;left:645.5px;top:698.5px;line-height:15px;font-size:11px">sůl [kg]</span>
<span class="t" style="letter-spacing:-0.140px;right:1099.64px;top:698.5px;line-height:15px;font-size:11px">0.0050</span>
<span class="t" style="letter-spacing:-0.140px;right:1036.64px;top:698.5px;line-height:15px;font-size:11px">0.0000</span>
<span class="t" style="letter-spacing:-0.140px;right:941.14px;top:698.5px;line-height:15px;font-size:11px">0.0214</span>
<span class="t" style="letter-spacing:-0.140px;right:855.64px;top:698.5px;line-height:15px;font-size:11px">0.0246</span>
<svg style="left:1075px;top:701.5px" width="8" height="9" viewBox="0 0 8 9"><path d="M.5 .5l7 8M7.5 .5l-7 8" stroke="#111" stroke-width="1"/></svg>
<span class="t" style="letter-spacing:-0.090px;left:645.5px;top:715.5px;line-height:15px;font-size:11px">olej [l]</span>
<span class="t" style="letter-spacing:-0.140px;right:1099.64px;top:715.5px;line-height:15px;font-size:11px">0.0100</span>
<span class="t" style="letter-spacing:-0.140px;right:1036.64px;top:715.5px;line-height:15px;font-size:11px">0.0000</span>
<span class="t" style="letter-spacing:-0.140px;right:941.14px;top:715.5px;line-height:15px;font-size:11px">0.1744</span>
<span class="t" style="letter-spacing:-0.140px;right:855.64px;top:715.5px;line-height:15px;font-size:11px">0.2005</span>
<svg style="left:1075px;top:718.5px" width="8" height="9" viewBox="0 0 8 9"><path d="M.5 .5l7 8M7.5 .5l-7 8" stroke="#111" stroke-width="1"/></svg>
<div style="left:1084px;top:621.5px;width:17px;height:109px;background:#f0f0f0"></div>
<div style="left:1084px;top:639.5px;width:17px;height:41px;background:#cdcdcd"></div>
<svg style="transform:rotate(180deg);left:1088px;top:629px" width="8" height="5.5" viewBox="0 0 8 5.5"><path d="M0.6 0.6 L4 4.5 L7.4 0.6" fill="none" stroke="#505050" stroke-width="1.6"/></svg>
<svg style="left:1088px;top:719px" width="8" height="5.5" viewBox="0 0 8 5.5"><path d="M0.6 0.6 L4 4.5 L7.4 0.6" fill="none" stroke="#505050" stroke-width="1.6"/></svg>
<div style="left:638px;top:730.5px;width:463px;height:15.5px;background:#f0f0f0"></div>
<div style="left:656px;top:730.5px;width:403px;height:15.5px;background:#cdcdcd"></div>
<svg style="left:644px;top:734px" width="6" height="9" viewBox="0 0 6 9"><path d="M5 .7L1 4.5L5 8.3" fill="none" stroke="#505050" stroke-width="1.6"/></svg>
<svg style="left:1072px;top:734px" width="6" height="9" viewBox="0 0 6 9"><path d="M1 .7L5 4.5L1 8.3" fill="none" stroke="#505050" stroke-width="1.6"/></svg>
<span class="t" style="letter-spacing:-0.152px;left:657.5px;top:754.5px;line-height:15px;font-size:11px">Nákup bez DPH</span>
<div style="left:657px;top:773.5px;width:80px;height:19.5px;background:#f0f0f0;border:1px solid #646464"></div>
<span class="t" style="letter-spacing:-0.142px;right:1181.14px;top:776px;line-height:15px;font-size:11px">17.0412</span>
<span class="t" style="letter-spacing:-0.151px;left:748.5px;top:754.5px;line-height:15px;font-size:11px">Nákup s DPH</span>
<div style="left:748px;top:773.5px;width:80px;height:19.5px;background:#f0f0f0;border:1px solid #646464"></div>
<span class="t" style="letter-spacing:-0.142px;right:1090.14px;top:776px;line-height:15px;font-size:11px">19.5973</span>
<span class="t" style="letter-spacing:-0.149px;left:840.5px;top:754.5px;line-height:15px;font-size:11px">Marže(%)</span>
<div style="left:840px;top:773.5px;width:80px;height:19.5px;background:#f0f0f0;border:1px solid #646464"></div>
<span class="t" style="letter-spacing:-0.138px;right:998.138px;top:776px;line-height:15px;font-size:11px">84.81</span>
<span class="t" style="letter-spacing:-0.131px;left:931.5px;top:754.5px;line-height:15px;font-size:11px">Přirážka(%)</span>
<div style="left:931px;top:773.5px;width:80px;height:19.5px;background:#f0f0f0;border:1px solid #646464"></div>
<span class="t" style="letter-spacing:-0.140px;right:907.14px;top:776px;line-height:15px;font-size:11px">558.25</span>
<span class="t" style="letter-spacing:-0.121px;left:1023.5px;top:754.5px;line-height:15px;font-size:11px">Zisk (Kč)</span>
<div style="left:1023px;top:773.5px;width:80px;height:19.5px;background:#f0f0f0;border:1px solid #646464"></div>
<span class="t" style="letter-spacing:-0.138px;right:815.138px;top:776px;line-height:15px;font-size:11px">95.13</span>
<div style="left:633px;top:810px;width:168px;height:49px;border:1px solid;border-color:#a0a0a0 #fff #fff #a0a0a0"></div>
<div class="btn" style="left:809px;top:810.5px;width:132.5px;height:20.5px;"></div><span class="t" style="letter-spacing:-0.124px;left:875.188px;transform:translateX(-50%);top:813.25px;line-height:15px;font-size:11px">Vložit obrázek k produktu</span>
<div class="btn" style="left:809px;top:839px;width:132.5px;height:20.5px;"></div><span class="t" style="letter-spacing:-0.155px;left:875.172px;transform:translateX(-50%);top:841.75px;line-height:15px;font-size:11px">Smazat</span>
<div class="btn" style="left:1120px;top:225px;width:84px;height:35px;"></div><span class="t" style="letter-spacing:-0.146px;left:1161.93px;transform:translateX(-50%);top:228.5px;line-height:15px;font-size:11px">Název pro PDA</span><span class="t" style="letter-spacing:-0.116px;left:1161.94px;transform:translateX(-50%);top:241.5px;line-height:15px;font-size:11px">(mobilní čišník)</span>
<div class="btn" style="left:1213px;top:226px;width:78px;height:34px;"></div><span class="t" style="letter-spacing:-0.133px;left:1251.93px;transform:translateX(-50%);top:235.5px;line-height:15px;font-size:11px">Výběr alergenů</span>
<div class="btn" style="left:1213px;top:269px;width:78px;height:32px;"></div><span class="t" style="letter-spacing:-0.125px;left:1251.94px;transform:translateX(-50%);top:277.5px;line-height:15px;font-size:11px">Regálový štítek</span>
<span class="t" style="letter-spacing:-0.136px;left:1125.7px;top:463.5px;line-height:15px;font-size:11px">Zvýraznění</span>
<div style="left:1119px;top:487px;width:86px;height:21px;background:#fff;border:1px solid #569de5"></div>
<span class="t" style="letter-spacing:-0.150px;left:1122.5px;top:490px;line-height:15px;font-size:11px">žádné</span>
<div style="left:1119px;top:508.5px;width:86px;height:120.5px;background:#fff;border:1px solid #828790"></div>
<div style="left:1121px;top:510.5px;width:82px;height:12.5px;background:#0078d7"></div>
<span class="t" style="letter-spacing:-0.150px;left:1123.4px;top:509.5px;line-height:15px;font-size:11px;color:#fff">žádné</span>
<span class="t" style="letter-spacing:-0.140px;left:1123.4px;top:522.5px;line-height:15px;font-size:11px;color:#000">červená</span>
<span class="t" style="letter-spacing:-0.135px;left:1123.4px;top:535.5px;line-height:15px;font-size:11px;color:#000">zelená</span>
<span class="t" style="letter-spacing:-0.156px;left:1123.4px;top:548.5px;line-height:15px;font-size:11px;color:#000">modrá</span>
<span class="t" style="letter-spacing:-0.116px;left:1123.4px;top:561.5px;line-height:15px;font-size:11px;color:#000">žlutá</span>
<span class="t" style="letter-spacing:-0.129px;left:1123.4px;top:574.5px;line-height:15px;font-size:11px;color:#000">tyrkysová</span>
<span class="t" style="letter-spacing:-0.114px;left:1123.4px;top:587.5px;line-height:15px;font-size:11px;color:#000">fialová</span>
<div class="btn" style="left:1130px;top:642px;width:73px;height:34px;"></div><span class="t" style="letter-spacing:-0.134px;left:1166.43px;transform:translateX(-50%);top:645px;line-height:15px;font-size:11px">Zobrazení ve</span><span class="t" style="letter-spacing:-0.150px;left:1166.43px;transform:translateX(-50%);top:658px;line-height:15px;font-size:11px">dnech</span>
<span class="t" style="letter-spacing:-0.123px;left:1119.4px;top:692px;line-height:15px;font-size:11px">Otvírat automat.</span>
<span class="t" style="letter-spacing:-0.126px;left:1119.4px;top:704.5px;line-height:15px;font-size:11px">"skupinu" v kase</span>
<div class="cmb" style="left:1119px;top:726.5px;width:86px;height:20.5px;"></div><svg style="left:1190px;top:734.25px" width="9" height="6" viewBox="0 0 9 6"><path d="M0.6 0.6 L4.5 5 L8.4 0.6" fill="none" stroke="#444" stroke-width="1.2"/></svg>
<span class="t" style="letter-spacing:-0.153px;left:1119.4px;top:759px;line-height:15px;font-size:11px">Kód v CESK</span>
<div class="inp" style="left:1117px;top:776px;width:92px;height:23px;"></div>
<div style="left:1127px;top:827.3px;width:75px;height:29.5px;background:linear-gradient(160.0deg,#ffffff 0%,#fafafa 30%,#eeeeee 52%,#d6d6d6 70%,#bababa 86%,#a2a2a2 100%)"></div>
<div style="left:1212px;top:827.3px;width:75px;height:29.5px;background:linear-gradient(160.0deg,#ffffff 0%,#fafafa 30%,#eeeeee 52%,#d6d6d6 70%,#bababa 86%,#a2a2a2 100%)"></div>
<span class="t" style="letter-spacing:-0.199px;left:1181.9px;transform:translateX(-50%);top:834.8px;line-height:15px;font-size:11px">OK</span>
<span class="t" style="letter-spacing:-0.117px;left:1266.44px;transform:translateX(-50%);top:834.8px;line-height:15px;font-size:11px">Zavřít</span>
<svg style="left:1125px;top:822px" width="170" height="40" viewBox="1125 822 170 40"><defs><linearGradient id="ck2" x1="0" y1="0" x2="1" y2="1"><stop offset="0" stop-color="#7ee06c"/><stop offset="1" stop-color="#23a032"/></linearGradient><linearGradient id="rx" x1="0" y1="0" x2="0" y2="1"><stop offset="0" stop-color="#ee3030"/><stop offset="0.5" stop-color="#d01010"/><stop offset="1" stop-color="#b80000"/></linearGradient></defs><path d="M1134 842.2 L1142 852 L1155.8 830.8" fill="none" stroke="#2f8f36" stroke-width="7.4" stroke-linecap="round" stroke-linejoin="round"/><path d="M1134 842.2 L1142 852 L1155.8 830.8" fill="none" stroke="url(#ck2)" stroke-width="5.8" stroke-linecap="round" stroke-linejoin="round"/><path d="M1135.5 841.5 L1142 849.5 L1154.5 830.5" fill="none" stroke="#a8f09a" stroke-width="1.2" stroke-linecap="round" stroke-linejoin="round" opacity=".7"/><path d="M1219.3 832.3 L1240.7 852.9 M1240.7 832.3 L1219.3 852.9" fill="none" stroke="#7a0000" stroke-width="9.6"/><path d="M1219.3 832.3 L1240.7 852.9 M1240.7 832.3 L1219.3 852.9" fill="none" stroke="url(#rx)" stroke-width="8"/><path d="M1220.3 831.6 L1230 841 L1239.7 831.6" fill="none" stroke="#ff8a8a" stroke-width="1.1" opacity=".6"/></svg>
</body></html>
